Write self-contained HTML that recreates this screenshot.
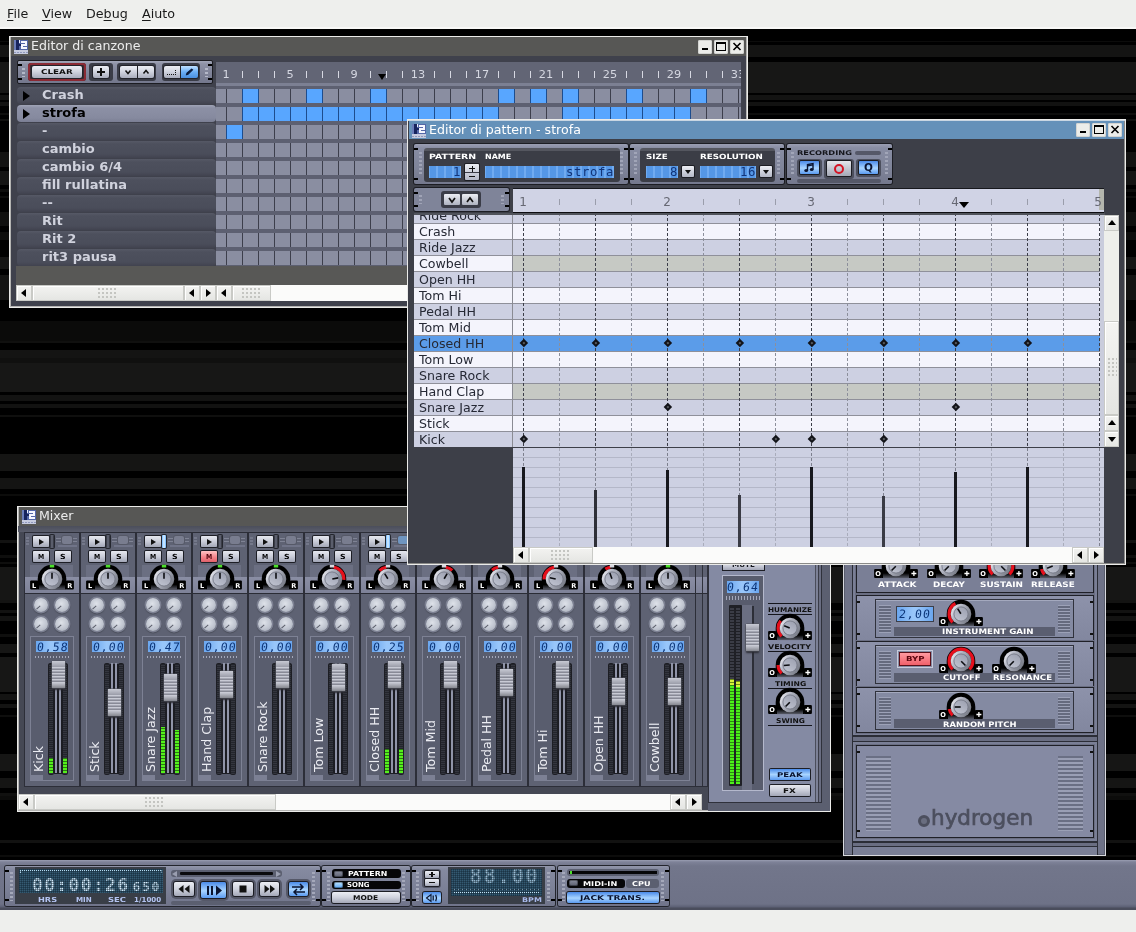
<!DOCTYPE html>
<html lang="it"><head><meta charset="utf-8"><title>Hydrogen</title>
<style>
html,body{margin:0;padding:0}
body{width:1136px;height:932px;overflow:hidden;background:#000;position:relative;
 font-family:"DejaVu Sans","Liberation Sans",sans-serif;font-size:12.6px;color:#000}
.a{position:absolute;box-sizing:border-box}
body>div{will-change:transform}
.t{white-space:nowrap;line-height:1}
.px{font-weight:bold;font-size:8px;letter-spacing:.5px;line-height:8px;white-space:nowrap}
.win{border:1px solid #ebebe9;box-shadow:inset 0 0 0 1px #b4b4b2;overflow:hidden}
.tb{left:1px;top:1px;right:1px;height:19px}
.tb .ti{position:absolute;left:20px;top:2px;font-size:12.6px;line-height:14px;color:#ececec;white-space:nowrap}
.wb{position:absolute;top:3px;width:14px;height:14px;background:#ecedea;border-radius:2px;box-shadow:inset 0 0 0 1px #d4d5d2}
.sbh{background:#fbfbfa}
.sbb{background:linear-gradient(#f4f4f2,#e4e5e2);box-shadow:inset 0 0 0 1px #c9cac6, inset 1px 1px 0 1px #fff}
.grip{position:absolute;left:50%;top:50%;width:19px;height:11px;margin:-5px 0 0 -10px;
 background-image:radial-gradient(circle at 1px 1px,#c4c5c1 0.8px,transparent 1px);background-size:4px 4px}
.tri{position:absolute;left:50%;top:50%;width:0;height:0;border:4px solid transparent}
.tl{border-right:5px solid #000;border-left:0;margin:-4px 0 0 -3px}
.tr{border-left:5px solid #000;border-right:0;margin:-4px 0 0 -2px}
.tu{border-bottom:5px solid #000;border-top:0;margin:-3px 0 0 -4px}
.td{border-top:5px solid #000;border-bottom:0;margin:-2px 0 0 -4px}

.pl{font-weight:bold;white-space:nowrap;transform-origin:0 0}


.kv text{font-weight:bold;font-size:6.6px;fill:#fff;text-anchor:middle;font-family:"DejaVu Sans","Liberation Sans",sans-serif}


#mb{left:0;top:0;width:1136px;height:29px;background:linear-gradient(#eeefed 0,#eeefed 27px,#f8f8f7 27px)}
#mb span{position:absolute;top:6px;font-size:12.7px;line-height:15px;color:#1a1a1a}
#mb u{text-decoration:underline;text-underline-offset:1.5px;text-decoration-thickness:1px}
#desk{left:0;top:29px;width:1136px;height:831px;background:#000}
.band{position:absolute;left:0;width:1136px;background:#121211}
#status{left:0;top:909.5px;width:1136px;height:23px;background:#eeefed}


#sw{left:9px;top:36px;width:739px;height:272px;background:#3f414c}
#sw .tb{background:#575755}
.ico{position:absolute;left:3px;top:3px;width:14px;height:14px;background:#5a6a9a;overflow:hidden}
.ico b{position:absolute;display:block}
#stool{left:8px;top:24px;width:195.5px;height:24px;border:1px solid #1c1d22;border-radius:2px;background:linear-gradient(#a2a6b8 0,#8e92a6 3px,#7e8297 60%,#74788d)}
.brk{position:absolute;width:4px;height:2px;background:#000}
.btn{position:absolute;border-radius:2px;background:linear-gradient(#eceef4 0,#d2d5e0 45%,#a9adbd 100%);box-shadow:0 0 0 1px #22232a;}
.btnwell{position:absolute;border-radius:3px;background:#3a3c47}
.plrow{position:absolute;left:8px;width:199px;height:17px;border-radius:4px;background:linear-gradient(#565966 0,#4d505d 3px,#4a4d5a 13px,#41434f 17px);font-weight:bold;font-size:13px;line-height:17px;color:#d0d2dd;white-space:nowrap}
.plrow i{position:absolute;left:25px;top:-1px;font-style:normal}
.plrow.sel{background:linear-gradient(#a0a4b7 0,#8c90a5 3px,#868a9f 13px,#7a7e93 17px);color:#000}
.plrow s{position:absolute;left:6px;top:3.5px;width:0;height:0;border:5px solid transparent;border-left:7px solid #000;border-right:0}
#sruler{left:207px;top:26px;width:525px;height:21px;background:#626575;overflow:hidden;font-size:11.3px;color:#d6d8e2}
#sruler i{position:absolute;top:9px;width:1px;height:7px;background:#d6d8e2}
#sruler span{position:absolute;top:5.5px;width:30px;margin-left:-15px;text-align:center;line-height:13px}
#sgrid{left:207px;top:47px;width:525px;height:183px;background:#5d6071;overflow:hidden}
.sr{position:absolute;left:0;width:525px;height:14px;background-color:#8a8ea1;
 background-image:linear-gradient(90deg,#3d3f4c 1px,transparent 1px);background-size:16px 14px;background-position:10px 0}
.sr b{position:absolute;top:0;height:14px;background-color:#58a6ff;background-image:linear-gradient(90deg,#1d4d8e 1px,transparent 1px);background-size:16px 14px;background-position:0 0;border-right:1px solid #1d4d8e}


#mw{left:17px;top:506px;width:814px;height:306px;background:#454854}
#mw .tb{background:#575755}
.strip{position:absolute;top:27px;width:54px;height:253px;background:#5e6273;box-shadow:0 0 0 1px #2c2e38}
.sbtn{position:absolute;border-radius:1px;background:linear-gradient(#e6e8ef 0,#c9ccd8 50%,#a3a7b7 100%);box-shadow:0 0 0 1px #1d1e25;font-weight:bold;font-size:7px;line-height:12px;text-align:center;color:#15161c}
.sbtn u{display:inline-block;text-decoration:none;transform:scaleX(1.25)}
.led{position:absolute;left:25px;top:2px;width:4px;height:13px;border-radius:1px;background:linear-gradient(90deg,#2a2c35,#6a6e7e 50%,#2a2c35);box-shadow:0 0 0 1px #24262e}
.led.on{background:linear-gradient(90deg,#6ab4ff,#e0f2ff 50%,#6ab4ff)}
.deco{position:absolute;left:31px;top:3px;width:21px;height:11px;opacity:.55}
.panbox{position:absolute;left:5.4px;top:32.2px;width:42.6px;height:12px;background:#6b6f82}
.panlo{position:absolute;left:0;top:44.2px;width:54px;height:15.6px;background:linear-gradient(#8a8ea4,#7e8298)}
.kb{position:absolute;border-radius:50%;background:#000}
.kn{position:absolute;border-radius:50%;background:radial-gradient(circle at 42% 35%,#dfe2ea 0,#b4b8c6 45%,#7c8090 85%,#5a5d6a 100%);box-shadow:inset 0 0 0 1px #4a4c58}
.kn i{position:absolute;left:50%;top:50%;width:2px;height:7px;margin:-8px 0 0 -1px;background:#16171c;transform-origin:50% 8px}
.kl{position:absolute;width:8px;height:8px;background:#000;color:#fff;font-weight:bold;font-size:8px;line-height:8px;text-align:center;border-radius:1px}
.fxk{position:absolute;width:14px;height:14px;border-radius:50%;background:radial-gradient(circle at 45% 40%,#dee2e9 0,#c0c5d0 55%,#9aa0ae 100%);box-shadow:0 0 0 1.5px #7c8092, 0 1px 1px 1.5px #4c4f5c}
.fxk i{position:absolute;left:2px;top:9px;width:5px;height:1.4px;background:#5a5d6a;transform:rotate(-42deg)}
.fbox{position:absolute;left:5px;top:103px;width:44px;height:145px;background:#595d6e;box-shadow:inset 0 0 0 1px #7d8194}
.lcd{position:absolute;background:linear-gradient(90deg,#6aa6ef,#98c6fa 45%,#98c6fa 55%,#6aa6ef);color:#0c3578;font-family:"DejaVu Sans Mono","Liberation Mono",monospace;font-size:11.5px;line-height:12px;text-align:center;letter-spacing:1.1px;overflow:hidden;white-space:nowrap}
.lcd u{display:inline-block;text-decoration:none;transform:skewX(-7deg);margin-right:-1.1px}
.dots{position:absolute;height:2px;background:repeating-linear-gradient(90deg,#a4a8ba 0 1px,transparent 1px 3px)}
.slot{position:absolute;width:6px;top:27px;height:112px;background:#23252c;border-radius:2px;background-image:repeating-linear-gradient(#34363f 0 1px,#23252c 1px 2px);box-shadow:inset 0 0 0 1px #1d1e24}
.mt{position:absolute;bottom:2px;left:1px;width:4px;background:repeating-linear-gradient(0deg,#55f01c 0 2px,#2c7a12 2px 3px)}
.rail{position:absolute;top:27px;width:1.8px;height:110px;background:#9094a8}
.chan{position:absolute;left:23.6px;top:28px;width:9.6px;height:110px;background:#1b1c22}
.fh{position:absolute;left:22px;width:13.4px;height:27px;border-radius:1px;background:repeating-linear-gradient(#c8cad4 0 1px,#a4a6b2 1px 2px,#888a96 2px 3px);box-shadow:0 0 0 .6px #50525c,0 2px 2px #2a2b33}
.fh:before{content:"";position:absolute;left:0;top:0;width:100%;height:6px;background:linear-gradient(#c8cad4,#9a9ca8)}
.fh:after{content:"";position:absolute;left:0;bottom:0;width:100%;height:5px;background:linear-gradient(#c2c4ce,#85878f)}
.sname{position:absolute;left:8px;top:139px;width:120px;height:14px;transform-origin:0 0;transform:rotate(-90deg);font-size:12.6px;line-height:14px;color:#ebecf2;white-space:nowrap}
.ftab{position:absolute;left:0;bottom:0;width:13px;height:6px;background:#7c8094}
#master{position:absolute;left:692px;top:20px;width:112px;height:276px;background:#848aa3;box-shadow:0 0 0 1px #2f313b}
#mframe{position:absolute;left:691px;top:19px;width:122px;height:286px;background:#5b5f70}
.hl{position:absolute;left:59px;width:44px;height:1px;background:#15161c}
.hz{position:absolute;left:59px;width:44px;text-align:center;font-weight:bold;font-size:7px;line-height:7px;color:#111;letter-spacing:.3px;white-space:nowrap}


#ip{left:843px;top:500px;width:263px;height:356px;background:#6f7388;border:1px solid #d8d9de;
 box-shadow:inset 0 0 0 1px #585c6c;overflow:hidden}
.rk{position:absolute;left:13px;width:236px;background:linear-gradient(#8d92aa,#82879f);box-shadow:0 0 0 1px #1f2027, 0 0 0 2px #6a6e82}
.rki{position:absolute;left:19px;width:197px;background:#848aa2;box-shadow:0 0 0 1px #30323c, inset 0 1px 0 #a4a9be}
.vent{position:absolute;width:12px;background:repeating-linear-gradient(#9ca1b7 0 1px,#656a7e 1px 3px)}
.lbar{position:absolute;left:17.5px;width:161.25px;height:9.5px;background:#5a5e70}
.wl{position:absolute;color:#fff;font-weight:bold;font-size:8px;line-height:8px;letter-spacing:.55px;white-space:nowrap}
.nub{position:absolute;width:3px;height:2px;background:#111}
#logo{position:absolute;left:61px;top:57px;width:130px;height:30px;color:#4c4f5e;font-size:21.5px;line-height:30px;letter-spacing:0;white-space:nowrap;-webkit-text-stroke:.7px #4c4f5e}


#pw{left:407px;top:119px;width:719px;height:446px;background:#3d3f48;box-shadow:inset 0 1px 0 0 #c9d6e2,inset -1px -1px 0 0 #8a8a88}
#pw .tb{background:#6591b9;height:18px}
#pw .wb{top:2px}
.pp{position:absolute;top:25px;height:40px;border-radius:2px;background:linear-gradient(#9a9eb2 0,#888da3 4px,#7f8499 60%,#74788d);box-shadow:0 0 0 1px #1c1d23}
.ppi{position:absolute;top:4px;height:34px;border-radius:3px;background:linear-gradient(#54565f 0,#54565f 3px,#3b3d46 3px)}
.ppi .wl{position:absolute;color:#fff;font-weight:bold;font-size:8px;line-height:8px;letter-spacing:.8px;white-space:nowrap}
.nb{position:absolute;width:4px;height:2px;background:#000}
.rv{position:absolute;width:3px;background:repeating-linear-gradient(#a8acbe 0 2px,transparent 2px 4px);opacity:.8}
.plcd{position:absolute;height:11.5px;background-color:#5597e6;background-image:linear-gradient(90deg,transparent 6px,#70abf1 6px);background-size:8px 12px;background-position:1px 0;
 color:#12357a;font-family:"DejaVu Sans Mono","Liberation Mono",monospace;font-size:12.3px;line-height:12px;text-align:right;white-space:nowrap;overflow:hidden;letter-spacing:.6px}
.dd{position:absolute;width:11.5px;height:11.5px;border-radius:1px;background:linear-gradient(#eceef4,#b4b8c6);box-shadow:0 0 0 1px #1c1d23}
.dd:after{content:"";position:absolute;left:2.5px;top:4px;border:3.2px solid transparent;border-top:4px solid #111;border-bottom:0}
#pruler{left:106px;top:69px;width:591px;height:25px;background:#d0d3e5;border-top:1px solid #17181d;border-bottom:1px solid #0c0c10;overflow:hidden;font-size:12px;color:#666873}
#pruler i{position:absolute;top:9.5px;width:1px;height:6px;background:#9a9dab}
#pruler span{position:absolute;top:5.5px;width:20px;margin-left:-10px;text-align:center;line-height:14px}
#plist{left:7px;top:96px;width:99px;height:232px;overflow:hidden;background:#8f909a;border-right:1px solid #8a8b93}
.ir{position:absolute;left:0;width:98px;height:15px;font-size:12.6px;line-height:15px;color:#262935;white-space:nowrap;padding-left:5px}
#pgrid{left:106px;top:96px;width:591px;height:232px;overflow:hidden;background:#8f909a}
.gr{position:absolute;left:0;width:587px;height:15px}
.vl{position:absolute;top:0;width:1px;height:333px;background:repeating-linear-gradient(#3c3e49 0 2.6px,transparent 2.6px 5px)}
.vl.q{background:repeating-linear-gradient(#8c8f9b 0 2.6px,transparent 2.6px 5px)}
.nt{position:absolute;width:5.8px;height:5.8px;background:#121318;transform:rotate(45deg);margin:-2.9px 0 0 -2.9px}
.nt:after{content:"";position:absolute;left:2.2px;top:2.2px;width:1.4px;height:1.4px;background:#5c5e62}
#pvel{left:106px;top:329px;width:591px;height:99px;overflow:hidden;background:#cdd0e2;background-image:repeating-linear-gradient(#cdd0e2 0 9px,#b4b7c8 9px 10px)}
.vb{position:absolute;bottom:0;width:3px;background:#17181e}


#tbar{left:0;top:860px;width:1136px;height:50px;background:linear-gradient(#9a9eb2 0,#7e8298 2px,#72768b 6px,#6e7287 44px,#5c6074 47px,#4a4d5c 48px,#4a4d5c 50px)}
.tp{position:absolute;top:6px;height:40px;background:linear-gradient(#9397ab 0,#858aa0 3px,#7b8096 60%,#70748a);border-radius:2px;box-shadow:0 0 0 1px #23252d}
.tp .nub{position:absolute;width:4px;height:2px;background:#000}
.rivets{position:absolute;top:6px;width:3px;height:29px;background:repeating-linear-gradient(#a4a8ba 0 2px,transparent 2px 4px)}
.dmb{position:absolute;background:#393e47}
.dm{position:absolute;background-color:#13242e;background-image:radial-gradient(circle at 1px 1px,#345a72 .75px,transparent .95px);background-size:2px 2px;overflow:hidden}
.dg{position:absolute;color:#d4eeff;font-weight:bold;font-family:"DejaVu Sans Mono","Liberation Mono",monospace;white-space:nowrap;line-height:1}
.dmo{position:absolute;left:0;top:0;right:0;bottom:0;background-image:linear-gradient(rgba(16,34,48,.42) 1px,transparent 1px),linear-gradient(90deg,rgba(16,34,48,.42) 1px,transparent 1px);background-size:2px 2px}
.tbtn{position:absolute;border-radius:2px;background:linear-gradient(#eceef4 0,#cfd2dd 50%,#a4a8b8 100%);box-shadow:0 0 0 1px #1c1d24,0 0 0 3px #555868}
.tbtn.nw{box-shadow:0 0 0 1px #1c1d24}
.tbtn.bl2{background:linear-gradient(#4a8ae8,#a8d4ff 55%,#5a9af0)}
.blk{position:absolute;background:#060608;border-radius:3px}
.tled{position:absolute;border-radius:2px;box-shadow:inset 0 0 0 1px rgba(0,0,0,.35)}
</style></head>
<body>
<svg width="0" height="0" style="position:absolute"><defs><linearGradient id="kg" x1="0" y1="0.2" x2="1" y2="0.8"><stop offset="0" stop-color="#f2f2f7"/><stop offset=".3" stop-color="#b8bbc8"/><stop offset="1" stop-color="#70747f"/></linearGradient><linearGradient id="kf" x1="0.8" y1="0" x2="0.2" y2="1"><stop offset="0" stop-color="#9ca0b0"/><stop offset="1" stop-color="#c0c4d1"/></linearGradient><linearGradient id="ks" x1="0" y1="0" x2="0" y2="1"><stop offset="0" stop-color="#000"/><stop offset="1" stop-color="#5a5d6a"/></linearGradient></defs></svg>
<div class="a" id="mb"><span style="left:7px"><u>F</u>ile</span><span style="left:42px"><u>V</u>iew</span><span style="left:86px">De<u>b</u>ug</span><span style="left:142px"><u>A</u>iuto</span></div>
<div class="a" id="desk"><div class="band" style="top:11.5px;height:1.5px;background:#0c0c0b"></div><div class="band" style="top:16px;height:12px;background:#141413"></div><div class="band" style="top:33px;height:30.7px;background:#171716"></div><div class="band" style="top:65.6px;height:5.8px;background:#131312"></div><div class="band" style="top:73px;height:4px;background:#121211"></div><div class="band" style="top:84px;height:2px;background:#0e0e0d"></div><div class="band" style="top:89.7px;height:2px;background:#10100f"></div><div class="band" style="top:122.5px;height:15.5px;background:#131312"></div><div class="band" style="top:142px;height:14px;background:#151514"></div><div class="band" style="top:160px;height:3px;background:#0d0d0c"></div><div class="band" style="top:167px;height:2px;background:#0c0c0b"></div><div class="band" style="top:183px;height:14px;background:#10100f"></div><div class="band" style="top:203px;height:8px;background:#0e0e0d"></div><div class="band" style="top:228px;height:12px;background:#151514"></div><div class="band" style="top:246px;height:25px;background:#141413"></div><div class="band" style="top:292px;height:19.5px;background:#0b0b0a"></div><div class="band" style="top:311.5px;height:2.5px;background:#10100f"></div><div class="band" style="top:320.5px;height:8px;background:#141413"></div><div class="band" style="top:328.5px;height:5.5px;background:#10100f"></div><div class="band" style="top:334px;height:29px;background:#171716"></div><div class="band" style="top:365.5px;height:6.5px;background:#131312"></div><div class="band" style="top:374.5px;height:4.5px;background:#121211"></div><div class="band" style="top:386px;height:2px;background:#0f0f0e"></div><div class="band" style="top:425px;height:17px;background:#151514"></div><div class="band" style="top:449px;height:11px;background:#141413"></div><div class="band" style="top:465px;height:2px;background:#0c0c0b"></div><div class="band" style="top:510.5px;height:3px;background:#121211"></div><div class="band" style="top:526px;height:3px;background:#0e0e0d"></div><div class="band" style="top:532.7px;height:2px;background:#0e0e0d"></div><div class="band" style="top:537.6px;height:33.8px;background:#161615"></div><div class="band" style="top:571.4px;height:2.6px;background:#131312"></div><div class="band" style="top:581px;height:3px;background:#121211"></div><div class="band" style="top:586.8px;height:4.8px;background:#131312"></div><div class="band" style="top:605px;height:3px;background:#0f0f0e"></div><div class="band" style="top:615px;height:8.5px;background:#161615"></div><div class="band" style="top:628px;height:34.6px;background:#171716"></div><div class="band" style="top:664.5px;height:6.5px;background:#141413"></div><div class="band" style="top:675px;height:4px;background:#141413"></div><div class="band" style="top:685.7px;height:2px;background:#0e0e0d"></div><div class="band" style="top:725px;height:16.7px;background:#161615"></div><div class="band" style="top:748.5px;height:10.5px;background:#151514"></div><div class="band" style="top:764px;height:3px;background:#111110"></div><div class="band" style="top:767px;height:4px;background:#0c0c0b"></div><div class="band" style="top:811px;height:3px;background:#121211"></div><div class="band" style="top:825.7px;height:1.9px;background:#0c0c0b"></div></div>
<div class="a" id="status"></div>
<div class="a win" id="sw"><div class="a" style="left:-1px;top:-1px;width:739px;height:272px"><div class="a tb" style="left:2px;top:1px;width:735px"><div class="ico"><b style="left:0px;top:0px;width:14px;height:10px;background:#5467a8"></b><b style="left:2px;top:0px;width:3px;height:10px;background:#17245e"></b><b style="left:5px;top:4px;width:2px;height:2px;background:#17245e"></b><b style="left:0px;top:0px;width:2px;height:10px;background:#6a7cb8"></b><b style="left:5px;top:0px;width:1px;height:3px;background:#e8ecf8"></b><b style="left:7px;top:1px;width:6px;height:1.6px;background:#f6f7ff"></b><b style="left:11.4px;top:2px;width:1.6px;height:3px;background:#f6f7ff"></b><b style="left:7px;top:4.2px;width:6px;height:1.6px;background:#f6f7ff"></b><b style="left:7px;top:5px;width:1.6px;height:3px;background:#f6f7ff"></b><b style="left:7px;top:7.4px;width:6px;height:1.6px;background:#f6f7ff"></b><b style="left:0px;top:10px;width:14px;height:4px;background:#c6cbdf"></b><b style="left:0px;top:12px;width:14px;height:1px;background:repeating-linear-gradient(90deg,#8f98bc 0 2px,#c6cbdf 2px 3px)"></b></div><div class="ti">Editor di canzone</div><div class="wb" style="left:687px"><b style="position:absolute;left:4px;top:8px;width:6px;height:2px;background:#000"></b></div><div class="wb" style="left:703px"><b style="position:absolute;left:2px;top:2px;width:10px;height:9px;border:1px solid #000;border-top-width:2px;box-sizing:border-box"></b></div><div class="wb" style="left:719px"><svg width="14" height="14" style="position:absolute;left:0;top:0"><path d="M3.5 3 L10.5 10 M10.5 3 L3.5 10" stroke="#000" stroke-width="1.6" fill="none"/></svg></div></div><div class="a" id="stool"><div class="brk" style="left:0;top:3px"></div><div class="brk" style="right:0;top:3px"></div><div class="brk" style="left:0;top:17px"></div><div class="brk" style="right:0;top:17px"></div><b class="a" style="left:4px;top:7px;width:3px;height:9px;background:repeating-linear-gradient(#b4b8c8 0 2px,transparent 2px 4px)"></b><b class="a" style="right:4px;top:7px;width:3px;height:9px;background:repeating-linear-gradient(#b4b8c8 0 2px,transparent 2px 4px)"></b><div class="a" style="left:10px;top:2px;width:58px;height:18px;border-radius:3px;background:#3a2a30;box-shadow:inset 0 0 0 2px #8a2a34"></div><div class="btn" style="left:14px;top:5px;width:50px;height:12px"><div class="a pl" style="left:8.75px;top:2.5278px;font-size:6.6px;line-height:6.6px;color:#111;transform:scaleX(1.337);">CLEAR</div></div><div class="btnwell" style="left:71px;top:2px;width:24px;height:18px"></div><div class="btn" style="left:75px;top:5px;width:16px;height:12px"><b class="a" style="left:4px;top:5.3px;width:8px;height:1.4px;background:#111"></b><b class="a" style="left:7.3px;top:2px;width:1.4px;height:8px;background:#111"></b></div><div class="btnwell" style="left:99.4px;top:2px;width:39px;height:18px"></div><div class="btn" style="left:102px;top:5px;width:16.5px;height:12px;border-radius:2px 0 0 2px"><svg class="a" width="16" height="12" style="left:0;top:0"><path d="M5.5 4.5 L8 7.5 L10.5 4.5" stroke="#111" stroke-width="1.5" fill="none"/></svg></div><div class="btn" style="left:119.5px;top:5px;width:16.5px;height:12px;border-radius:0 2px 2px 0"><svg class="a" width="16" height="12" style="left:0;top:0"><path d="M5.5 7.5 L8 4.5 L10.5 7.5" stroke="#111" stroke-width="1.5" fill="none"/></svg></div><div class="btnwell" style="left:143.8px;top:2px;width:38.6px;height:18px"></div><div class="btn" style="left:146px;top:5px;width:16px;height:12px;border-radius:2px 0 0 2px"><b class="a" style="left:3px;top:8px;width:7px;height:1px;background:repeating-linear-gradient(90deg,#111 0 1px,transparent 1px 2px)"></b><b class="a" style="left:11px;top:4px;width:1px;height:5px;background:repeating-linear-gradient(#111 0 1px,transparent 1px 2px)"></b></div><div class="btn" style="left:163px;top:5px;width:17px;height:12px;border-radius:0 2px 2px 0;background:linear-gradient(#bfe0ff,#6aaef6 50%,#4a8fe0)"><svg class="a" width="17" height="12" style="left:0;top:0"><path d="M5.5 8.6 L7 8.3 L11.5 3.8 L10.6 3.2 L6 7 Z" fill="#0a1a3a" stroke="#0a1a3a" stroke-width="1.1"/></svg></div></div><div class="plrow" style="top:51px"><s></s><i>Crash</i></div><div class="plrow sel" style="top:69px"><s></s><i>strofa</i></div><div class="plrow" style="top:87px"><i>-</i></div><div class="plrow" style="top:105px"><i>cambio</i></div><div class="plrow" style="top:123px"><i>cambio 6/4</i></div><div class="plrow" style="top:141px"><i>fill rullatina</i></div><div class="plrow" style="top:159px"><i>--</i></div><div class="plrow" style="top:177px"><i>Rit</i></div><div class="plrow" style="top:195px"><i>Rit 2</i></div><div class="plrow" style="top:213px"><i>rit3 pausa</i></div><div class="a" id="sruler"><span style="left:10px">1</span><i style="left:26px"></i><i style="left:42px"></i><i style="left:58px"></i><span style="left:74px">5</span><i style="left:90px"></i><i style="left:106px"></i><i style="left:122px"></i><span style="left:138px">9</span><i style="left:154px"></i><i style="left:170px"></i><i style="left:186px"></i><span style="left:202px">13</span><i style="left:218px"></i><i style="left:234px"></i><i style="left:250px"></i><span style="left:266px">17</span><i style="left:282px"></i><i style="left:298px"></i><i style="left:314px"></i><span style="left:330px">21</span><i style="left:346px"></i><i style="left:362px"></i><i style="left:378px"></i><span style="left:394px">25</span><i style="left:410px"></i><i style="left:426px"></i><i style="left:442px"></i><span style="left:458px">29</span><i style="left:474px"></i><i style="left:490px"></i><i style="left:506px"></i><span style="left:522px">33</span><i style="left:538px"></i><b class="a" style="left:162px;top:12px;width:0;height:0;border:4.5px solid transparent;border-top:6px solid #000;border-bottom:0"></b></div><div class="a" id="sgrid"><div class="a" style="left:0;top:0;width:525px;height:3px;background:#7c8093"></div><div class="sr" style="top:6px"><b style="left:26px;width:16px"></b><b style="left:90px;width:16px"></b><b style="left:154px;width:16px"></b><b style="left:282px;width:16px"></b><b style="left:314px;width:16px"></b><b style="left:346px;width:16px"></b><b style="left:410px;width:16px"></b><b style="left:474px;width:16px"></b></div><div class="sr" style="top:24px"><b style="left:26px;width:256px"></b><b style="left:346px;width:128px"></b></div><div class="sr" style="top:42px"><b style="left:10px;width:16px"></b></div><div class="sr" style="top:60px"></div><div class="sr" style="top:78px"></div><div class="sr" style="top:96px"></div><div class="sr" style="top:114px"></div><div class="sr" style="top:132px"></div><div class="sr" style="top:150px"></div><div class="sr" style="top:168px"></div></div><div class="a" style="left:7px;top:230px;width:725px;height:19px;background:#585856"></div><div class="a sbh" style="left:7px;top:249px;width:200px;height:16px;"></div><div class="a sbb" style="left:7px;top:249px;width:16px;height:16px;"><div class="tri tl"></div></div><div class="a sbb" style="left:175px;top:249px;width:16px;height:16px;"><div class="tri tl"></div></div><div class="a sbb" style="left:191px;top:249px;width:16px;height:16px;"><div class="tri tr"></div></div><div class="a sbb" style="left:23px;top:249px;width:152px;height:16px;"><div class="grip"></div></div><div class="a sbh" style="left:207px;top:249px;width:525px;height:16px;"></div><div class="a sbb" style="left:207px;top:249px;width:16px;height:16px;"><div class="tri tl"></div></div><div class="a sbb" style="left:700px;top:249px;width:16px;height:16px;"><div class="tri tl"></div></div><div class="a sbb" style="left:716px;top:249px;width:16px;height:16px;"><div class="tri tr"></div></div><div class="a sbb" style="left:223px;top:249px;width:39px;height:16px;"><div class="grip"></div></div></div></div>
<div class="a win" id="mw"><div class="a" style="left:-1px;top:-1px;width:814px;height:306px"><div class="a tb" style="left:2px;top:1px;width:810px"><div class="ico"><b style="left:0px;top:0px;width:14px;height:10px;background:#5467a8"></b><b style="left:2px;top:0px;width:3px;height:10px;background:#17245e"></b><b style="left:5px;top:4px;width:2px;height:2px;background:#17245e"></b><b style="left:0px;top:0px;width:2px;height:10px;background:#6a7cb8"></b><b style="left:5px;top:0px;width:1px;height:3px;background:#e8ecf8"></b><b style="left:7px;top:1px;width:6px;height:1.6px;background:#f6f7ff"></b><b style="left:11.4px;top:2px;width:1.6px;height:3px;background:#f6f7ff"></b><b style="left:7px;top:4.2px;width:6px;height:1.6px;background:#f6f7ff"></b><b style="left:7px;top:5px;width:1.6px;height:3px;background:#f6f7ff"></b><b style="left:7px;top:7.4px;width:6px;height:1.6px;background:#f6f7ff"></b><b style="left:0px;top:10px;width:14px;height:4px;background:#c6cbdf"></b><b style="left:0px;top:12px;width:14px;height:1px;background:repeating-linear-gradient(90deg,#8f98bc 0 2px,#c6cbdf 2px 3px)"></b></div><div class="ti">Mixer</div></div><div class="a" style="left:1px;top:20px;width:812px;height:6px;background:linear-gradient(#4b4e5b,#5a5d6c)"></div><div class="strip" style="left:8px"><b class="a" style="left:1px;top:4px;width:3px;height:9px;background:repeating-linear-gradient(#74788a 0 2px,transparent 2px 3px)"></b><div class="sbtn" style="left:8px;top:3px;width:16px;height:11px"><b class="a" style="left:6px;top:2.5px;width:0;height:0;border:3px solid transparent;border-left:5px solid #111;border-right:0"></b></div><div class="led"></div><div class="deco"><b class="a" style="left:0;top:2px;width:21px;height:1px;background:#9a9eb0"></b><b class="a" style="left:0;top:5px;width:21px;height:1px;background:#9a9eb0"></b><b class="a" style="left:6px;top:0;width:10px;height:8px;border-radius:2px;background:#9094a6;box-shadow:0 0 0 1px #50535f"></b><b class="a" style="left:2px;top:9px;width:19px;height:2px;background:#80849a"></b></div><div class="sbtn" style="left:8px;top:18px;width:16px;height:11px;"><div class="a pl" style="left:4.9px;top:3.181px;font-size:7px;line-height:7px;color:#000;transform:scaleX(0.890);">M</div></div><div class="sbtn" style="left:30px;top:18px;width:16px;height:11px"><div class="a pl" style="left:5.2px;top:3.181px;font-size:7px;line-height:7px;color:#000;transform:scaleX(1.111);">S</div></div><div class="panbox"></div><div class="panlo"></div><svg class="a kv" style="left:4.1px;top:30.3px" width="46" height="27" viewBox="-23 -16 46 27"><path d="M-14.3 0 A14.3 14.3 0 1 1 14.3 0 V10.6 H-14.3 Z" fill="#000"/><rect x="-13" y="5.6" width="26" height="5" fill="url(#ks)"/><rect x="-21.9" y="1.5" width="8" height="9.1" rx="1" fill="#000"/><rect x="13.9" y="1.5" width="8" height="9.1" rx="1" fill="#000"/><circle r="10.3" fill="url(#kg)"/><circle r="7.1" fill="url(#kf)" stroke="#6c707e" stroke-width=".8"/><path d="M0.00 -0.30 L0.00 -6.30" stroke="#0c0d11" stroke-width="1.6"/><text x="-18" y="8.5">L</text><text x="17.9" y="8.5">R</text><rect x="-2.2" y="-14.2" width="4.4" height="2.7" fill="#4be02a"/></svg><div class="a" style="left:0;top:59.8px;width:54px;height:1.6px;background:#2a2c35"></div><div class="fxk" style="left:9px;top:65px"><i></i></div><div class="fxk" style="left:9px;top:84px"><i></i></div><div class="fxk" style="left:30px;top:65px"><i></i></div><div class="fxk" style="left:30px;top:84px"><i></i></div><div class="fbox"><div class="lcd" style="left:6.2px;top:4.6px;width:31.8px;height:11.6px;letter-spacing:.95px"><u style="margin-right:-.95px">0,58</u></div><div class="dots" style="left:5px;top:20px;width:35px"></div><div class="slot" style="left:18px"><div class="mt" style="height:15px"></div></div><div class="slot" style="left:32px"><div class="mt" style="height:15px"></div></div><div class="chan"></div><div class="rail" style="left:24.9px"></div><div class="rail" style="left:29px"></div><div class="fh" style="top:25px"></div><div class="ftab"></div><div class="sname" style="top:136px;left:2.4px">Kick</div></div></div><div class="strip" style="left:64px"><b class="a" style="left:1px;top:4px;width:3px;height:9px;background:repeating-linear-gradient(#74788a 0 2px,transparent 2px 3px)"></b><div class="sbtn" style="left:8px;top:3px;width:16px;height:11px"><b class="a" style="left:6px;top:2.5px;width:0;height:0;border:3px solid transparent;border-left:5px solid #111;border-right:0"></b></div><div class="led"></div><div class="deco"><b class="a" style="left:0;top:2px;width:21px;height:1px;background:#9a9eb0"></b><b class="a" style="left:0;top:5px;width:21px;height:1px;background:#9a9eb0"></b><b class="a" style="left:6px;top:0;width:10px;height:8px;border-radius:2px;background:#9094a6;box-shadow:0 0 0 1px #50535f"></b><b class="a" style="left:2px;top:9px;width:19px;height:2px;background:#80849a"></b></div><div class="sbtn" style="left:8px;top:18px;width:16px;height:11px;"><div class="a pl" style="left:4.9px;top:3.181px;font-size:7px;line-height:7px;color:#000;transform:scaleX(0.890);">M</div></div><div class="sbtn" style="left:30px;top:18px;width:16px;height:11px"><div class="a pl" style="left:5.2px;top:3.181px;font-size:7px;line-height:7px;color:#000;transform:scaleX(1.111);">S</div></div><div class="panbox"></div><div class="panlo"></div><svg class="a kv" style="left:4.1px;top:30.3px" width="46" height="27" viewBox="-23 -16 46 27"><path d="M-14.3 0 A14.3 14.3 0 1 1 14.3 0 V10.6 H-14.3 Z" fill="#000"/><rect x="-13" y="5.6" width="26" height="5" fill="url(#ks)"/><rect x="-21.9" y="1.5" width="8" height="9.1" rx="1" fill="#000"/><rect x="13.9" y="1.5" width="8" height="9.1" rx="1" fill="#000"/><circle r="10.3" fill="url(#kg)"/><circle r="7.1" fill="url(#kf)" stroke="#6c707e" stroke-width=".8"/><path d="M0.00 -0.30 L0.00 -6.30" stroke="#0c0d11" stroke-width="1.6"/><text x="-18" y="8.5">L</text><text x="17.9" y="8.5">R</text><rect x="-2.2" y="-14.2" width="4.4" height="2.7" fill="#4be02a"/></svg><div class="a" style="left:0;top:59.8px;width:54px;height:1.6px;background:#2a2c35"></div><div class="fxk" style="left:9px;top:65px"><i></i></div><div class="fxk" style="left:9px;top:84px"><i></i></div><div class="fxk" style="left:30px;top:65px"><i></i></div><div class="fxk" style="left:30px;top:84px"><i></i></div><div class="fbox"><div class="lcd" style="left:6.2px;top:4.6px;width:31.8px;height:11.6px;letter-spacing:.95px"><u style="margin-right:-.95px">0,00</u></div><div class="dots" style="left:5px;top:20px;width:35px"></div><div class="slot" style="left:18px"></div><div class="slot" style="left:32px"></div><div class="chan"></div><div class="rail" style="left:24.9px"></div><div class="rail" style="left:29px"></div><div class="fh" style="top:52.5px"></div><div class="ftab"></div><div class="sname" style="top:136px;left:2.4px">Stick</div></div></div><div class="strip" style="left:120px"><b class="a" style="left:1px;top:4px;width:3px;height:9px;background:repeating-linear-gradient(#74788a 0 2px,transparent 2px 3px)"></b><div class="sbtn" style="left:8px;top:3px;width:16px;height:11px"><b class="a" style="left:6px;top:2.5px;width:0;height:0;border:3px solid transparent;border-left:5px solid #111;border-right:0"></b></div><div class="led on"></div><div class="deco"><b class="a" style="left:0;top:2px;width:21px;height:1px;background:#9a9eb0"></b><b class="a" style="left:0;top:5px;width:21px;height:1px;background:#9a9eb0"></b><b class="a" style="left:6px;top:0;width:10px;height:8px;border-radius:2px;background:#9094a6;box-shadow:0 0 0 1px #50535f"></b><b class="a" style="left:2px;top:9px;width:19px;height:2px;background:#80849a"></b></div><div class="sbtn" style="left:8px;top:18px;width:16px;height:11px;"><div class="a pl" style="left:4.9px;top:3.181px;font-size:7px;line-height:7px;color:#000;transform:scaleX(0.890);">M</div></div><div class="sbtn" style="left:30px;top:18px;width:16px;height:11px"><div class="a pl" style="left:5.2px;top:3.181px;font-size:7px;line-height:7px;color:#000;transform:scaleX(1.111);">S</div></div><div class="panbox"></div><div class="panlo"></div><svg class="a kv" style="left:4.1px;top:30.3px" width="46" height="27" viewBox="-23 -16 46 27"><path d="M-14.3 0 A14.3 14.3 0 1 1 14.3 0 V10.6 H-14.3 Z" fill="#000"/><rect x="-13" y="5.6" width="26" height="5" fill="url(#ks)"/><rect x="-21.9" y="1.5" width="8" height="9.1" rx="1" fill="#000"/><rect x="13.9" y="1.5" width="8" height="9.1" rx="1" fill="#000"/><circle r="10.3" fill="url(#kg)"/><circle r="7.1" fill="url(#kf)" stroke="#6c707e" stroke-width=".8"/><path d="M0.00 -0.30 L0.00 -6.30" stroke="#0c0d11" stroke-width="1.6"/><text x="-18" y="8.5">L</text><text x="17.9" y="8.5">R</text><rect x="-2.2" y="-14.2" width="4.4" height="2.7" fill="#4be02a"/></svg><div class="a" style="left:0;top:59.8px;width:54px;height:1.6px;background:#2a2c35"></div><div class="fxk" style="left:9px;top:65px"><i></i></div><div class="fxk" style="left:9px;top:84px"><i></i></div><div class="fxk" style="left:30px;top:65px"><i></i></div><div class="fxk" style="left:30px;top:84px"><i></i></div><div class="fbox"><div class="lcd" style="left:6.2px;top:4.6px;width:31.8px;height:11.6px;letter-spacing:.95px"><u style="margin-right:-.95px">0,47</u></div><div class="dots" style="left:5px;top:20px;width:35px"></div><div class="slot" style="left:18px"><div class="mt" style="height:46px"></div></div><div class="slot" style="left:32px"><div class="mt" style="height:43px"></div></div><div class="chan"></div><div class="rail" style="left:24.9px"></div><div class="rail" style="left:29px"></div><div class="fh" style="top:38px"></div><div class="ftab"></div><div class="sname" style="top:136px;left:2.4px">Snare Jazz</div></div></div><div class="strip" style="left:176px"><b class="a" style="left:1px;top:4px;width:3px;height:9px;background:repeating-linear-gradient(#74788a 0 2px,transparent 2px 3px)"></b><div class="sbtn" style="left:8px;top:3px;width:16px;height:11px"><b class="a" style="left:6px;top:2.5px;width:0;height:0;border:3px solid transparent;border-left:5px solid #111;border-right:0"></b></div><div class="led"></div><div class="deco"><b class="a" style="left:0;top:2px;width:21px;height:1px;background:#9a9eb0"></b><b class="a" style="left:0;top:5px;width:21px;height:1px;background:#9a9eb0"></b><b class="a" style="left:6px;top:0;width:10px;height:8px;border-radius:2px;background:#9094a6;box-shadow:0 0 0 1px #50535f"></b><b class="a" style="left:2px;top:9px;width:19px;height:2px;background:#80849a"></b></div><div class="sbtn" style="left:8px;top:18px;width:16px;height:11px;background:linear-gradient(#ffc4c4,#f4848a 55%,#e0606a);color:#5a0a10"><div class="a pl" style="left:4.9px;top:3.181px;font-size:7px;line-height:7px;color:#4a0008;transform:scaleX(0.890);">M</div></div><div class="sbtn" style="left:30px;top:18px;width:16px;height:11px"><div class="a pl" style="left:5.2px;top:3.181px;font-size:7px;line-height:7px;color:#000;transform:scaleX(1.111);">S</div></div><div class="panbox"></div><div class="panlo"></div><svg class="a kv" style="left:4.1px;top:30.3px" width="46" height="27" viewBox="-23 -16 46 27"><path d="M-14.3 0 A14.3 14.3 0 1 1 14.3 0 V10.6 H-14.3 Z" fill="#000"/><rect x="-13" y="5.6" width="26" height="5" fill="url(#ks)"/><rect x="-21.9" y="1.5" width="8" height="9.1" rx="1" fill="#000"/><rect x="13.9" y="1.5" width="8" height="9.1" rx="1" fill="#000"/><circle r="10.3" fill="url(#kg)"/><circle r="7.1" fill="url(#kf)" stroke="#6c707e" stroke-width=".8"/><path d="M0.00 -0.30 L0.00 -6.30" stroke="#0c0d11" stroke-width="1.6"/><text x="-18" y="8.5">L</text><text x="17.9" y="8.5">R</text><rect x="-2.2" y="-14.2" width="4.4" height="2.7" fill="#4be02a"/></svg><div class="a" style="left:0;top:59.8px;width:54px;height:1.6px;background:#2a2c35"></div><div class="fxk" style="left:9px;top:65px"><i></i></div><div class="fxk" style="left:9px;top:84px"><i></i></div><div class="fxk" style="left:30px;top:65px"><i></i></div><div class="fxk" style="left:30px;top:84px"><i></i></div><div class="fbox"><div class="lcd" style="left:6.2px;top:4.6px;width:31.8px;height:11.6px;letter-spacing:.95px"><u style="margin-right:-.95px">0,00</u></div><div class="dots" style="left:5px;top:20px;width:35px"></div><div class="slot" style="left:18px"></div><div class="slot" style="left:32px"></div><div class="chan"></div><div class="rail" style="left:24.9px"></div><div class="rail" style="left:29px"></div><div class="fh" style="top:35px"></div><div class="ftab"></div><div class="sname" style="top:136px;left:2.4px">Hand Clap</div></div></div><div class="strip" style="left:232px"><b class="a" style="left:1px;top:4px;width:3px;height:9px;background:repeating-linear-gradient(#74788a 0 2px,transparent 2px 3px)"></b><div class="sbtn" style="left:8px;top:3px;width:16px;height:11px"><b class="a" style="left:6px;top:2.5px;width:0;height:0;border:3px solid transparent;border-left:5px solid #111;border-right:0"></b></div><div class="led"></div><div class="deco"><b class="a" style="left:0;top:2px;width:21px;height:1px;background:#9a9eb0"></b><b class="a" style="left:0;top:5px;width:21px;height:1px;background:#9a9eb0"></b><b class="a" style="left:6px;top:0;width:10px;height:8px;border-radius:2px;background:#9094a6;box-shadow:0 0 0 1px #50535f"></b><b class="a" style="left:2px;top:9px;width:19px;height:2px;background:#80849a"></b></div><div class="sbtn" style="left:8px;top:18px;width:16px;height:11px;"><div class="a pl" style="left:4.9px;top:3.181px;font-size:7px;line-height:7px;color:#000;transform:scaleX(0.890);">M</div></div><div class="sbtn" style="left:30px;top:18px;width:16px;height:11px"><div class="a pl" style="left:5.2px;top:3.181px;font-size:7px;line-height:7px;color:#000;transform:scaleX(1.111);">S</div></div><div class="panbox"></div><div class="panlo"></div><svg class="a kv" style="left:4.1px;top:30.3px" width="46" height="27" viewBox="-23 -16 46 27"><path d="M-14.3 0 A14.3 14.3 0 1 1 14.3 0 V10.6 H-14.3 Z" fill="#000"/><rect x="-13" y="5.6" width="26" height="5" fill="url(#ks)"/><rect x="-21.9" y="1.5" width="8" height="9.1" rx="1" fill="#000"/><rect x="13.9" y="1.5" width="8" height="9.1" rx="1" fill="#000"/><circle r="10.3" fill="url(#kg)"/><circle r="7.1" fill="url(#kf)" stroke="#6c707e" stroke-width=".8"/><path d="M0.00 -0.30 L0.00 -6.30" stroke="#0c0d11" stroke-width="1.6"/><text x="-18" y="8.5">L</text><text x="17.9" y="8.5">R</text><rect x="-2.2" y="-14.2" width="4.4" height="2.7" fill="#4be02a"/></svg><div class="a" style="left:0;top:59.8px;width:54px;height:1.6px;background:#2a2c35"></div><div class="fxk" style="left:9px;top:65px"><i></i></div><div class="fxk" style="left:9px;top:84px"><i></i></div><div class="fxk" style="left:30px;top:65px"><i></i></div><div class="fxk" style="left:30px;top:84px"><i></i></div><div class="fbox"><div class="lcd" style="left:6.2px;top:4.6px;width:31.8px;height:11.6px;letter-spacing:.95px"><u style="margin-right:-.95px">0,00</u></div><div class="dots" style="left:5px;top:20px;width:35px"></div><div class="slot" style="left:18px"></div><div class="slot" style="left:32px"></div><div class="chan"></div><div class="rail" style="left:24.9px"></div><div class="rail" style="left:29px"></div><div class="fh" style="top:25px"></div><div class="ftab"></div><div class="sname" style="top:136px;left:2.4px">Snare Rock</div></div></div><div class="strip" style="left:288px"><b class="a" style="left:1px;top:4px;width:3px;height:9px;background:repeating-linear-gradient(#74788a 0 2px,transparent 2px 3px)"></b><div class="sbtn" style="left:8px;top:3px;width:16px;height:11px"><b class="a" style="left:6px;top:2.5px;width:0;height:0;border:3px solid transparent;border-left:5px solid #111;border-right:0"></b></div><div class="led"></div><div class="deco"><b class="a" style="left:0;top:2px;width:21px;height:1px;background:#9a9eb0"></b><b class="a" style="left:0;top:5px;width:21px;height:1px;background:#9a9eb0"></b><b class="a" style="left:6px;top:0;width:10px;height:8px;border-radius:2px;background:#9094a6;box-shadow:0 0 0 1px #50535f"></b><b class="a" style="left:2px;top:9px;width:19px;height:2px;background:#80849a"></b></div><div class="sbtn" style="left:8px;top:18px;width:16px;height:11px;"><div class="a pl" style="left:4.9px;top:3.181px;font-size:7px;line-height:7px;color:#000;transform:scaleX(0.890);">M</div></div><div class="sbtn" style="left:30px;top:18px;width:16px;height:11px"><div class="a pl" style="left:5.2px;top:3.181px;font-size:7px;line-height:7px;color:#000;transform:scaleX(1.111);">S</div></div><div class="panbox"></div><div class="panlo"></div><svg class="a kv" style="left:4.1px;top:30.3px" width="46" height="27" viewBox="-23 -16 46 27"><path d="M-14.3 0 A14.3 14.3 0 1 1 14.3 0 V10.6 H-14.3 Z" fill="#000"/><rect x="-13" y="5.6" width="26" height="5" fill="url(#ks)"/><rect x="-21.9" y="1.5" width="8" height="9.1" rx="1" fill="#000"/><rect x="13.9" y="1.5" width="8" height="9.1" rx="1" fill="#000"/><path d="M1.66 -11.78 A11.9 11.9 0 0 1 11.87 0.83" stroke="#e60f1c" stroke-width="3.2" fill="none"/><circle r="10.3" fill="url(#kg)"/><circle r="7.1" fill="url(#kf)" stroke="#6c707e" stroke-width=".8"/><path d="M0.30 -0.05 L6.20 -1.09" stroke="#0c0d11" stroke-width="1.6"/><text x="-18" y="8.5">L</text><text x="17.9" y="8.5">R</text><rect x="-2.2" y="-14.2" width="4.4" height="2.7" fill="#d8d8e0"/></svg><div class="a" style="left:0;top:59.8px;width:54px;height:1.6px;background:#2a2c35"></div><div class="fxk" style="left:9px;top:65px"><i></i></div><div class="fxk" style="left:9px;top:84px"><i></i></div><div class="fxk" style="left:30px;top:65px"><i></i></div><div class="fxk" style="left:30px;top:84px"><i></i></div><div class="fbox"><div class="lcd" style="left:6.2px;top:4.6px;width:31.8px;height:11.6px;letter-spacing:.95px"><u style="margin-right:-.95px">0,00</u></div><div class="dots" style="left:5px;top:20px;width:35px"></div><div class="slot" style="left:18px"></div><div class="slot" style="left:32px"></div><div class="chan"></div><div class="rail" style="left:24.9px"></div><div class="rail" style="left:29px"></div><div class="fh" style="top:28px"></div><div class="ftab"></div><div class="sname" style="top:136px;left:2.4px">Tom Low</div></div></div><div class="strip" style="left:344px"><b class="a" style="left:1px;top:4px;width:3px;height:9px;background:repeating-linear-gradient(#74788a 0 2px,transparent 2px 3px)"></b><div class="sbtn" style="left:8px;top:3px;width:16px;height:11px"><b class="a" style="left:6px;top:2.5px;width:0;height:0;border:3px solid transparent;border-left:5px solid #111;border-right:0"></b></div><div class="led on"></div><div class="deco"><b class="a" style="left:0;top:2px;width:21px;height:1px;background:#9a9eb0"></b><b class="a" style="left:0;top:5px;width:21px;height:1px;background:#9a9eb0"></b><b class="a" style="left:6px;top:0;width:10px;height:8px;border-radius:2px;background:#7ec0ff;box-shadow:0 0 0 1px #50535f"></b><b class="a" style="left:2px;top:9px;width:19px;height:2px;background:#80849a"></b></div><div class="sbtn" style="left:8px;top:18px;width:16px;height:11px;"><div class="a pl" style="left:4.9px;top:3.181px;font-size:7px;line-height:7px;color:#000;transform:scaleX(0.890);">M</div></div><div class="sbtn" style="left:30px;top:18px;width:16px;height:11px"><div class="a pl" style="left:5.2px;top:3.181px;font-size:7px;line-height:7px;color:#000;transform:scaleX(1.111);">S</div></div><div class="panbox"></div><div class="panlo"></div><svg class="a kv" style="left:4.1px;top:30.3px" width="46" height="27" viewBox="-23 -16 46 27"><path d="M-14.3 0 A14.3 14.3 0 1 1 14.3 0 V10.6 H-14.3 Z" fill="#000"/><rect x="-13" y="5.6" width="26" height="5" fill="url(#ks)"/><rect x="-21.9" y="1.5" width="8" height="9.1" rx="1" fill="#000"/><rect x="13.9" y="1.5" width="8" height="9.1" rx="1" fill="#000"/><path d="M-8.56 -8.27 A11.9 11.9 0 0 1 -1.66 -11.78" stroke="#e60f1c" stroke-width="3.2" fill="none"/><circle r="10.3" fill="url(#kg)"/><circle r="7.1" fill="url(#kf)" stroke="#6c707e" stroke-width=".8"/><path d="M-0.16 -0.25 L-3.34 -5.34" stroke="#0c0d11" stroke-width="1.6"/><text x="-18" y="8.5">L</text><text x="17.9" y="8.5">R</text><rect x="-2.2" y="-14.2" width="4.4" height="2.7" fill="#d8d8e0"/></svg><div class="a" style="left:0;top:59.8px;width:54px;height:1.6px;background:#2a2c35"></div><div class="fxk" style="left:9px;top:65px"><i></i></div><div class="fxk" style="left:9px;top:84px"><i></i></div><div class="fxk" style="left:30px;top:65px"><i></i></div><div class="fxk" style="left:30px;top:84px"><i></i></div><div class="fbox"><div class="lcd" style="left:6.2px;top:4.6px;width:31.8px;height:11.6px;letter-spacing:.95px"><u style="margin-right:-.95px">0,25</u></div><div class="dots" style="left:5px;top:20px;width:35px"></div><div class="slot" style="left:18px"><div class="mt" style="height:24px"></div></div><div class="slot" style="left:32px"><div class="mt" style="height:24px"></div></div><div class="chan"></div><div class="rail" style="left:24.9px"></div><div class="rail" style="left:29px"></div><div class="fh" style="top:25px"></div><div class="ftab"></div><div class="sname" style="top:136px;left:2.4px">Closed HH</div></div></div><div class="strip" style="left:400px"><b class="a" style="left:1px;top:4px;width:3px;height:9px;background:repeating-linear-gradient(#74788a 0 2px,transparent 2px 3px)"></b><div class="sbtn" style="left:8px;top:3px;width:16px;height:11px"><b class="a" style="left:6px;top:2.5px;width:0;height:0;border:3px solid transparent;border-left:5px solid #111;border-right:0"></b></div><div class="led"></div><div class="deco"><b class="a" style="left:0;top:2px;width:21px;height:1px;background:#9a9eb0"></b><b class="a" style="left:0;top:5px;width:21px;height:1px;background:#9a9eb0"></b><b class="a" style="left:6px;top:0;width:10px;height:8px;border-radius:2px;background:#9094a6;box-shadow:0 0 0 1px #50535f"></b><b class="a" style="left:2px;top:9px;width:19px;height:2px;background:#80849a"></b></div><div class="sbtn" style="left:8px;top:18px;width:16px;height:11px;"><div class="a pl" style="left:4.9px;top:3.181px;font-size:7px;line-height:7px;color:#000;transform:scaleX(0.890);">M</div></div><div class="sbtn" style="left:30px;top:18px;width:16px;height:11px"><div class="a pl" style="left:5.2px;top:3.181px;font-size:7px;line-height:7px;color:#000;transform:scaleX(1.111);">S</div></div><div class="panbox"></div><div class="panlo"></div><svg class="a kv" style="left:4.1px;top:30.3px" width="46" height="27" viewBox="-23 -16 46 27"><path d="M-14.3 0 A14.3 14.3 0 1 1 14.3 0 V10.6 H-14.3 Z" fill="#000"/><rect x="-13" y="5.6" width="26" height="5" fill="url(#ks)"/><rect x="-21.9" y="1.5" width="8" height="9.1" rx="1" fill="#000"/><rect x="13.9" y="1.5" width="8" height="9.1" rx="1" fill="#000"/><path d="M1.66 -11.78 A11.9 11.9 0 0 1 8.27 -8.56" stroke="#e60f1c" stroke-width="3.2" fill="none"/><circle r="10.3" fill="url(#kg)"/><circle r="7.1" fill="url(#kf)" stroke="#6c707e" stroke-width=".8"/><path d="M0.15 -0.26 L3.15 -5.46" stroke="#0c0d11" stroke-width="1.6"/><text x="-18" y="8.5">L</text><text x="17.9" y="8.5">R</text><rect x="-2.2" y="-14.2" width="4.4" height="2.7" fill="#d8d8e0"/></svg><div class="a" style="left:0;top:59.8px;width:54px;height:1.6px;background:#2a2c35"></div><div class="fxk" style="left:9px;top:65px"><i></i></div><div class="fxk" style="left:9px;top:84px"><i></i></div><div class="fxk" style="left:30px;top:65px"><i></i></div><div class="fxk" style="left:30px;top:84px"><i></i></div><div class="fbox"><div class="lcd" style="left:6.2px;top:4.6px;width:31.8px;height:11.6px;letter-spacing:.95px"><u style="margin-right:-.95px">0,00</u></div><div class="dots" style="left:5px;top:20px;width:35px"></div><div class="slot" style="left:18px"></div><div class="slot" style="left:32px"></div><div class="chan"></div><div class="rail" style="left:24.9px"></div><div class="rail" style="left:29px"></div><div class="fh" style="top:25px"></div><div class="ftab"></div><div class="sname" style="top:136px;left:2.4px">Tom Mid</div></div></div><div class="strip" style="left:456px"><b class="a" style="left:1px;top:4px;width:3px;height:9px;background:repeating-linear-gradient(#74788a 0 2px,transparent 2px 3px)"></b><div class="sbtn" style="left:8px;top:3px;width:16px;height:11px"><b class="a" style="left:6px;top:2.5px;width:0;height:0;border:3px solid transparent;border-left:5px solid #111;border-right:0"></b></div><div class="led"></div><div class="deco"><b class="a" style="left:0;top:2px;width:21px;height:1px;background:#9a9eb0"></b><b class="a" style="left:0;top:5px;width:21px;height:1px;background:#9a9eb0"></b><b class="a" style="left:6px;top:0;width:10px;height:8px;border-radius:2px;background:#9094a6;box-shadow:0 0 0 1px #50535f"></b><b class="a" style="left:2px;top:9px;width:19px;height:2px;background:#80849a"></b></div><div class="sbtn" style="left:8px;top:18px;width:16px;height:11px;"><div class="a pl" style="left:4.9px;top:3.181px;font-size:7px;line-height:7px;color:#000;transform:scaleX(0.890);">M</div></div><div class="sbtn" style="left:30px;top:18px;width:16px;height:11px"><div class="a pl" style="left:5.2px;top:3.181px;font-size:7px;line-height:7px;color:#000;transform:scaleX(1.111);">S</div></div><div class="panbox"></div><div class="panlo"></div><svg class="a kv" style="left:4.1px;top:30.3px" width="46" height="27" viewBox="-23 -16 46 27"><path d="M-14.3 0 A14.3 14.3 0 1 1 14.3 0 V10.6 H-14.3 Z" fill="#000"/><rect x="-13" y="5.6" width="26" height="5" fill="url(#ks)"/><rect x="-21.9" y="1.5" width="8" height="9.1" rx="1" fill="#000"/><rect x="13.9" y="1.5" width="8" height="9.1" rx="1" fill="#000"/><path d="M-7.96 -8.84 A11.9 11.9 0 0 1 -1.66 -11.78" stroke="#e60f1c" stroke-width="3.2" fill="none"/><circle r="10.3" fill="url(#kg)"/><circle r="7.1" fill="url(#kf)" stroke="#6c707e" stroke-width=".8"/><path d="M-0.14 -0.26 L-2.96 -5.56" stroke="#0c0d11" stroke-width="1.6"/><text x="-18" y="8.5">L</text><text x="17.9" y="8.5">R</text><rect x="-2.2" y="-14.2" width="4.4" height="2.7" fill="#d8d8e0"/></svg><div class="a" style="left:0;top:59.8px;width:54px;height:1.6px;background:#2a2c35"></div><div class="fxk" style="left:9px;top:65px"><i></i></div><div class="fxk" style="left:9px;top:84px"><i></i></div><div class="fxk" style="left:30px;top:65px"><i></i></div><div class="fxk" style="left:30px;top:84px"><i></i></div><div class="fbox"><div class="lcd" style="left:6.2px;top:4.6px;width:31.8px;height:11.6px;letter-spacing:.95px"><u style="margin-right:-.95px">0,00</u></div><div class="dots" style="left:5px;top:20px;width:35px"></div><div class="slot" style="left:18px"></div><div class="slot" style="left:32px"></div><div class="chan"></div><div class="rail" style="left:24.9px"></div><div class="rail" style="left:29px"></div><div class="fh" style="top:33px"></div><div class="ftab"></div><div class="sname" style="top:136px;left:2.4px">Pedal HH</div></div></div><div class="strip" style="left:512px"><b class="a" style="left:1px;top:4px;width:3px;height:9px;background:repeating-linear-gradient(#74788a 0 2px,transparent 2px 3px)"></b><div class="sbtn" style="left:8px;top:3px;width:16px;height:11px"><b class="a" style="left:6px;top:2.5px;width:0;height:0;border:3px solid transparent;border-left:5px solid #111;border-right:0"></b></div><div class="led"></div><div class="deco"><b class="a" style="left:0;top:2px;width:21px;height:1px;background:#9a9eb0"></b><b class="a" style="left:0;top:5px;width:21px;height:1px;background:#9a9eb0"></b><b class="a" style="left:6px;top:0;width:10px;height:8px;border-radius:2px;background:#9094a6;box-shadow:0 0 0 1px #50535f"></b><b class="a" style="left:2px;top:9px;width:19px;height:2px;background:#80849a"></b></div><div class="sbtn" style="left:8px;top:18px;width:16px;height:11px;"><div class="a pl" style="left:4.9px;top:3.181px;font-size:7px;line-height:7px;color:#000;transform:scaleX(0.890);">M</div></div><div class="sbtn" style="left:30px;top:18px;width:16px;height:11px"><div class="a pl" style="left:5.2px;top:3.181px;font-size:7px;line-height:7px;color:#000;transform:scaleX(1.111);">S</div></div><div class="panbox"></div><div class="panlo"></div><svg class="a kv" style="left:4.1px;top:30.3px" width="46" height="27" viewBox="-23 -16 46 27"><path d="M-14.3 0 A14.3 14.3 0 1 1 14.3 0 V10.6 H-14.3 Z" fill="#000"/><rect x="-13" y="5.6" width="26" height="5" fill="url(#ks)"/><rect x="-21.9" y="1.5" width="8" height="9.1" rx="1" fill="#000"/><rect x="13.9" y="1.5" width="8" height="9.1" rx="1" fill="#000"/><path d="M-11.89 0.42 A11.9 11.9 0 0 1 -1.66 -11.78" stroke="#e60f1c" stroke-width="3.2" fill="none"/><circle r="10.3" fill="url(#kg)"/><circle r="7.1" fill="url(#kf)" stroke="#6c707e" stroke-width=".8"/><path d="M-0.29 -0.06 L-6.16 -1.31" stroke="#0c0d11" stroke-width="1.6"/><text x="-18" y="8.5">L</text><text x="17.9" y="8.5">R</text><rect x="-2.2" y="-14.2" width="4.4" height="2.7" fill="#d8d8e0"/></svg><div class="a" style="left:0;top:59.8px;width:54px;height:1.6px;background:#2a2c35"></div><div class="fxk" style="left:9px;top:65px"><i></i></div><div class="fxk" style="left:9px;top:84px"><i></i></div><div class="fxk" style="left:30px;top:65px"><i></i></div><div class="fxk" style="left:30px;top:84px"><i></i></div><div class="fbox"><div class="lcd" style="left:6.2px;top:4.6px;width:31.8px;height:11.6px;letter-spacing:.95px"><u style="margin-right:-.95px">0,00</u></div><div class="dots" style="left:5px;top:20px;width:35px"></div><div class="slot" style="left:18px"></div><div class="slot" style="left:32px"></div><div class="chan"></div><div class="rail" style="left:24.9px"></div><div class="rail" style="left:29px"></div><div class="fh" style="top:25px"></div><div class="ftab"></div><div class="sname" style="top:136px;left:2.4px">Tom Hi</div></div></div><div class="strip" style="left:568px"><b class="a" style="left:1px;top:4px;width:3px;height:9px;background:repeating-linear-gradient(#74788a 0 2px,transparent 2px 3px)"></b><div class="sbtn" style="left:8px;top:3px;width:16px;height:11px"><b class="a" style="left:6px;top:2.5px;width:0;height:0;border:3px solid transparent;border-left:5px solid #111;border-right:0"></b></div><div class="led"></div><div class="deco"><b class="a" style="left:0;top:2px;width:21px;height:1px;background:#9a9eb0"></b><b class="a" style="left:0;top:5px;width:21px;height:1px;background:#9a9eb0"></b><b class="a" style="left:6px;top:0;width:10px;height:8px;border-radius:2px;background:#9094a6;box-shadow:0 0 0 1px #50535f"></b><b class="a" style="left:2px;top:9px;width:19px;height:2px;background:#80849a"></b></div><div class="sbtn" style="left:8px;top:18px;width:16px;height:11px;"><div class="a pl" style="left:4.9px;top:3.181px;font-size:7px;line-height:7px;color:#000;transform:scaleX(0.890);">M</div></div><div class="sbtn" style="left:30px;top:18px;width:16px;height:11px"><div class="a pl" style="left:5.2px;top:3.181px;font-size:7px;line-height:7px;color:#000;transform:scaleX(1.111);">S</div></div><div class="panbox"></div><div class="panlo"></div><svg class="a kv" style="left:4.1px;top:30.3px" width="46" height="27" viewBox="-23 -16 46 27"><path d="M-14.3 0 A14.3 14.3 0 1 1 14.3 0 V10.6 H-14.3 Z" fill="#000"/><rect x="-13" y="5.6" width="26" height="5" fill="url(#ks)"/><rect x="-21.9" y="1.5" width="8" height="9.1" rx="1" fill="#000"/><rect x="13.9" y="1.5" width="8" height="9.1" rx="1" fill="#000"/><path d="M-6.65 -9.87 A11.9 11.9 0 0 1 -1.66 -11.78" stroke="#e60f1c" stroke-width="3.2" fill="none"/><circle r="10.3" fill="url(#kg)"/><circle r="7.1" fill="url(#kf)" stroke="#6c707e" stroke-width=".8"/><path d="M-0.10 -0.28 L-2.15 -5.92" stroke="#0c0d11" stroke-width="1.6"/><text x="-18" y="8.5">L</text><text x="17.9" y="8.5">R</text><rect x="-2.2" y="-14.2" width="4.4" height="2.7" fill="#d8d8e0"/></svg><div class="a" style="left:0;top:59.8px;width:54px;height:1.6px;background:#2a2c35"></div><div class="fxk" style="left:9px;top:65px"><i></i></div><div class="fxk" style="left:9px;top:84px"><i></i></div><div class="fxk" style="left:30px;top:65px"><i></i></div><div class="fxk" style="left:30px;top:84px"><i></i></div><div class="fbox"><div class="lcd" style="left:6.2px;top:4.6px;width:31.8px;height:11.6px;letter-spacing:.95px"><u style="margin-right:-.95px">0,00</u></div><div class="dots" style="left:5px;top:20px;width:35px"></div><div class="slot" style="left:18px"></div><div class="slot" style="left:32px"></div><div class="chan"></div><div class="rail" style="left:24.9px"></div><div class="rail" style="left:29px"></div><div class="fh" style="top:41.5px"></div><div class="ftab"></div><div class="sname" style="top:136px;left:2.4px">Open HH</div></div></div><div class="strip" style="left:624px"><b class="a" style="left:1px;top:4px;width:3px;height:9px;background:repeating-linear-gradient(#74788a 0 2px,transparent 2px 3px)"></b><div class="sbtn" style="left:8px;top:3px;width:16px;height:11px"><b class="a" style="left:6px;top:2.5px;width:0;height:0;border:3px solid transparent;border-left:5px solid #111;border-right:0"></b></div><div class="led"></div><div class="deco"><b class="a" style="left:0;top:2px;width:21px;height:1px;background:#9a9eb0"></b><b class="a" style="left:0;top:5px;width:21px;height:1px;background:#9a9eb0"></b><b class="a" style="left:6px;top:0;width:10px;height:8px;border-radius:2px;background:#9094a6;box-shadow:0 0 0 1px #50535f"></b><b class="a" style="left:2px;top:9px;width:19px;height:2px;background:#80849a"></b></div><div class="sbtn" style="left:8px;top:18px;width:16px;height:11px;"><div class="a pl" style="left:4.9px;top:3.181px;font-size:7px;line-height:7px;color:#000;transform:scaleX(0.890);">M</div></div><div class="sbtn" style="left:30px;top:18px;width:16px;height:11px"><div class="a pl" style="left:5.2px;top:3.181px;font-size:7px;line-height:7px;color:#000;transform:scaleX(1.111);">S</div></div><div class="panbox"></div><div class="panlo"></div><svg class="a kv" style="left:4.1px;top:30.3px" width="46" height="27" viewBox="-23 -16 46 27"><path d="M-14.3 0 A14.3 14.3 0 1 1 14.3 0 V10.6 H-14.3 Z" fill="#000"/><rect x="-13" y="5.6" width="26" height="5" fill="url(#ks)"/><rect x="-21.9" y="1.5" width="8" height="9.1" rx="1" fill="#000"/><rect x="13.9" y="1.5" width="8" height="9.1" rx="1" fill="#000"/><circle r="10.3" fill="url(#kg)"/><circle r="7.1" fill="url(#kf)" stroke="#6c707e" stroke-width=".8"/><path d="M0.00 -0.30 L0.00 -6.30" stroke="#0c0d11" stroke-width="1.6"/><text x="-18" y="8.5">L</text><text x="17.9" y="8.5">R</text><rect x="-2.2" y="-14.2" width="4.4" height="2.7" fill="#4be02a"/></svg><div class="a" style="left:0;top:59.8px;width:54px;height:1.6px;background:#2a2c35"></div><div class="fxk" style="left:9px;top:65px"><i></i></div><div class="fxk" style="left:9px;top:84px"><i></i></div><div class="fxk" style="left:30px;top:65px"><i></i></div><div class="fxk" style="left:30px;top:84px"><i></i></div><div class="fbox"><div class="lcd" style="left:6.2px;top:4.6px;width:31.8px;height:11.6px;letter-spacing:.95px"><u style="margin-right:-.95px">0,00</u></div><div class="dots" style="left:5px;top:20px;width:35px"></div><div class="slot" style="left:18px"></div><div class="slot" style="left:32px"></div><div class="chan"></div><div class="rail" style="left:24.9px"></div><div class="rail" style="left:29px"></div><div class="fh" style="top:41.5px"></div><div class="ftab"></div><div class="sname" style="top:136px;left:2.4px">Cowbell</div></div></div><div class="a" style="left:679px;top:27px;width:13px;height:253px;background:#5e6273;box-shadow:0 0 0 1px #2c2e38"></div><div class="a" style="left:679px;top:71.2px;width:13px;height:15.6px;background:linear-gradient(#8a8ea4,#7e8298)"></div><div class="a" style="left:685px;top:27px;width:1.3px;height:253px;background:#2f313b"></div><div class="a" style="left:690px;top:27px;width:1.5px;height:253px;background:#2f313b"></div><div class="a" style="left:679px;top:86.8px;width:13px;height:1.6px;background:#2a2c35"></div><div id="mframe"></div><div id="master"><div class="sbtn" style="left:14px;top:36px;width:41px;height:8px;border-radius:0"><div class="a pl" style="left:9px;top:-0.1722px;font-size:6.6px;line-height:6.6px;color:#15161c;transform:scaleX(1.098);">MUTE</div></div><div class="a" style="left:13px;top:49px;width:42px;height:216px;background:#585c6d;box-shadow:inset 0 0 0 1px #b4b8cc"></div><div class="lcd" style="left:18px;top:55px;width:32px;height:11.6px"><u>0,64</u></div><div class="dots" style="left:17px;top:70px;width:35px;height:4px"></div><div class="a" style="left:20px;top:79px;width:13px;height:181px;background:#1f2026;border-radius:1px"></div><div class="a" style="left:21px;top:81px;width:4px;height:177px;background:repeating-linear-gradient(0deg,#3a3c46 0 2px,#1f2026 2px 3px)"></div><div class="a" style="left:27px;top:81px;width:4px;height:177px;background:repeating-linear-gradient(0deg,#3a3c46 0 2px,#1f2026 2px 3px)"></div><div class="a" style="left:21px;top:153px;width:4px;height:105px;background:repeating-linear-gradient(0deg,#4cf01a 0 2px,#2a8a10 2px 3px)"></div><div class="a" style="left:21px;top:153px;width:4px;height:6px;background:repeating-linear-gradient(0deg,#d8f03a 0 2px,#6a8a10 2px 3px)"></div><div class="a" style="left:27px;top:155px;width:4px;height:103px;background:repeating-linear-gradient(0deg,#4cf01a 0 2px,#2a8a10 2px 3px)"></div><div class="a" style="left:27px;top:155px;width:4px;height:6px;background:repeating-linear-gradient(0deg,#d8f03a 0 2px,#6a8a10 2px 3px)"></div><div class="a" style="left:33px;top:79px;width:10px;height:185px;background:#6b6f82"></div><div class="a" style="left:43px;top:80px;width:2px;height:178px;background:#2c2e37"></div><div class="fh" style="left:37px;top:98px;width:13px"></div><div class="hl" style="top:77px"></div><div class="a pl" style="left:59px;top:80.8278px;font-size:6.6px;line-height:6.6px;color:#111;transform:scaleX(1.105);">HUMANIZE</div><div class="hl" style="top:88px"></div><svg class="a kv" style="left:58.2px;top:86.1px" width="46" height="28.5" viewBox="-23 -16 46 28.5"><path d="M-14.3 0 A14.3 14.3 0 1 1 14.3 0 V12.1 H-14.3 Z" fill="#000"/><rect x="-13" y="7.1" width="26" height="5" fill="url(#ks)"/><rect x="-21.9" y="3" width="8" height="9.1" rx="1" fill="#000"/><rect x="13.9" y="3" width="8" height="9.1" rx="1" fill="#000"/><path d="M-8.41 8.41 A11.9 11.9 0 0 1 -9.38 -7.33" stroke="#e60f1c" stroke-width="3.2" fill="none"/><circle r="10.3" fill="url(#kg)"/><circle r="7.1" fill="url(#kf)" stroke="#6c707e" stroke-width=".8"/><path d="M-0.28 -0.11 L-5.84 -2.36" stroke="#0c0d11" stroke-width="1.6"/><text x="-18" y="10">O</text><path d="M15.4 7.5 h5 M17.9 5 v5" stroke="#fff" stroke-width="1.3"/></svg><div class="a pl" style="left:59px;top:117.828px;font-size:6.6px;line-height:6.6px;color:#111;transform:scaleX(1.202);">VELOCITY</div><div class="hl" style="top:125px"></div><svg class="a kv" style="left:58.2px;top:123px" width="46" height="28.5" viewBox="-23 -16 46 28.5"><path d="M-14.3 0 A14.3 14.3 0 1 1 14.3 0 V12.1 H-14.3 Z" fill="#000"/><rect x="-13" y="7.1" width="26" height="5" fill="url(#ks)"/><rect x="-21.9" y="3" width="8" height="9.1" rx="1" fill="#000"/><rect x="13.9" y="3" width="8" height="9.1" rx="1" fill="#000"/><path d="M-8.41 8.41 A11.9 11.9 0 0 1 -11.90 -0.00" stroke="#e60f1c" stroke-width="3.2" fill="none"/><circle r="10.3" fill="url(#kg)"/><circle r="7.1" fill="url(#kf)" stroke="#6c707e" stroke-width=".8"/><path d="M-0.30 0.03 L-6.28 0.55" stroke="#0c0d11" stroke-width="1.6"/><text x="-18" y="10">O</text><path d="M15.4 7.5 h5 M17.9 5 v5" stroke="#fff" stroke-width="1.3"/></svg><div class="a pl" style="left:65.75px;top:154.828px;font-size:6.6px;line-height:6.6px;color:#111;transform:scaleX(1.161);">TIMING</div><div class="hl" style="top:162px"></div><svg class="a kv" style="left:58.2px;top:160px" width="46" height="28.5" viewBox="-23 -16 46 28.5"><path d="M-14.3 0 A14.3 14.3 0 1 1 14.3 0 V12.1 H-14.3 Z" fill="#000"/><rect x="-13" y="7.1" width="26" height="5" fill="url(#ks)"/><rect x="-21.9" y="3" width="8" height="9.1" rx="1" fill="#000"/><rect x="13.9" y="3" width="8" height="9.1" rx="1" fill="#000"/><circle r="10.3" fill="url(#kg)"/><circle r="7.1" fill="url(#kf)" stroke="#6c707e" stroke-width=".8"/><path d="M-0.21 0.21 L-4.45 4.45" stroke="#0c0d11" stroke-width="1.6"/><text x="-18" y="10">O</text><path d="M15.4 7.5 h5 M17.9 5 v5" stroke="#fff" stroke-width="1.3"/></svg><div class="a pl" style="left:67px;top:192.028px;font-size:6.6px;line-height:6.6px;color:#111;transform:scaleX(1.140);">SWING</div><div class="hl" style="top:199px"></div><div class="sbtn" style="left:61px;top:243px;width:40px;height:11px;background:linear-gradient(#4a8ae8,#a8d4ff 50%,#5a9af0)"><div class="a pl" style="left:6.9px;top:3.2395px;font-size:6.5px;line-height:6.5px;color:#0a1430;transform:scaleX(1.328);">PEAK</div></div><div class="sbtn" style="left:61px;top:259px;width:40px;height:11px"><div class="a pl" style="left:12.75px;top:3.0395px;font-size:6.5px;line-height:6.5px;color:#111;transform:scaleX(1.360);">FX</div></div><div class="a" style="left:106px;top:0;width:6px;height:276px;background:linear-gradient(90deg,#4a4d5b 0 1px,#7c8197 1px 3px,#3a3c48 3px 4px,#6a6e82 4px)"></div></div><div class="a sbh" style="left:1px;top:288px;width:684px;height:16px;"></div><div class="a sbb" style="left:1px;top:288px;width:16px;height:16px;"><div class="tri tl"></div></div><div class="a sbb" style="left:653px;top:288px;width:16px;height:16px;"><div class="tri tl"></div></div><div class="a sbb" style="left:669px;top:288px;width:16px;height:16px;"><div class="tri tr"></div></div><div class="a sbb" style="left:17px;top:288px;width:242px;height:16px;"><div class="grip"></div></div></div></div>
<div class="a" id="ip"><div class="a" style="left:8px;top:0px;width:1px;height:355px;background:#2b2d36"></div><div class="a" style="left:253px;top:0px;width:1px;height:355px;background:#2b2d36"></div><div class="a" style="left:9px;top:0px;width:244px;height:355px;background:#7a7f96"></div><div class="rk" style="top:19px;height:72px;background:#7a7f96"><svg class="a kv" style="left:15.5px;top:30px" width="46" height="28.5" viewBox="-23 -16 46 28.5"><path d="M-14.3 0 A14.3 14.3 0 1 1 14.3 0 V12.1 H-14.3 Z" fill="#000"/><rect x="-13" y="7.1" width="26" height="5" fill="url(#ks)"/><rect x="-21.9" y="3" width="8" height="9.1" rx="1" fill="#000"/><rect x="13.9" y="3" width="8" height="9.1" rx="1" fill="#000"/><circle r="10.3" fill="url(#kg)"/><circle r="7.1" fill="url(#kf)" stroke="#6c707e" stroke-width=".8"/><path d="M-0.21 0.21 L-4.45 4.45" stroke="#0c0d11" stroke-width="1.6"/><text x="-18" y="10">O</text><path d="M15.4 7.5 h5 M17.9 5 v5" stroke="#fff" stroke-width="1.3"/></svg><svg class="a kv" style="left:69px;top:30px" width="46" height="28.5" viewBox="-23 -16 46 28.5"><path d="M-14.3 0 A14.3 14.3 0 1 1 14.3 0 V12.1 H-14.3 Z" fill="#000"/><rect x="-13" y="7.1" width="26" height="5" fill="url(#ks)"/><rect x="-21.9" y="3" width="8" height="9.1" rx="1" fill="#000"/><rect x="13.9" y="3" width="8" height="9.1" rx="1" fill="#000"/><circle r="10.3" fill="url(#kg)"/><circle r="7.1" fill="url(#kf)" stroke="#6c707e" stroke-width=".8"/><path d="M-0.21 0.21 L-4.45 4.45" stroke="#0c0d11" stroke-width="1.6"/><text x="-18" y="10">O</text><path d="M15.4 7.5 h5 M17.9 5 v5" stroke="#fff" stroke-width="1.3"/></svg><svg class="a kv" style="left:121px;top:30px" width="46" height="28.5" viewBox="-23 -16 46 28.5"><path d="M-14.3 0 A14.3 14.3 0 1 1 14.3 0 V12.1 H-14.3 Z" fill="#000"/><rect x="-13" y="7.1" width="26" height="5" fill="url(#ks)"/><rect x="-21.9" y="3" width="8" height="9.1" rx="1" fill="#000"/><rect x="13.9" y="3" width="8" height="9.1" rx="1" fill="#000"/><path d="M-8.41 8.41 A11.9 11.9 0 1 1 8.41 8.41" stroke="#e60f1c" stroke-width="3.2" fill="none"/><circle r="10.3" fill="url(#kg)"/><circle r="7.1" fill="url(#kf)" stroke="#6c707e" stroke-width=".8"/><path d="M0.21 0.21 L4.45 4.45" stroke="#0c0d11" stroke-width="1.6"/><text x="-18" y="10">O</text><path d="M15.4 7.5 h5 M17.9 5 v5" stroke="#fff" stroke-width="1.3"/></svg><svg class="a kv" style="left:173px;top:30px" width="46" height="28.5" viewBox="-23 -16 46 28.5"><path d="M-14.3 0 A14.3 14.3 0 1 1 14.3 0 V12.1 H-14.3 Z" fill="#000"/><rect x="-13" y="7.1" width="26" height="5" fill="url(#ks)"/><rect x="-21.9" y="3" width="8" height="9.1" rx="1" fill="#000"/><rect x="13.9" y="3" width="8" height="9.1" rx="1" fill="#000"/><path d="M-8.41 8.41 A11.9 11.9 0 0 1 -11.49 3.08" stroke="#e60f1c" stroke-width="3.2" fill="none"/><circle r="10.3" fill="url(#kg)"/><circle r="7.1" fill="url(#kf)" stroke="#6c707e" stroke-width=".8"/><path d="M-0.28 0.10 L-5.92 2.15" stroke="#0c0d11" stroke-width="1.6"/><text x="-18" y="10">O</text><path d="M15.4 7.5 h5 M17.9 5 v5" stroke="#fff" stroke-width="1.3"/></svg><div class="a pl" style="left:21px;top:60.6225px;font-size:7.5px;line-height:7.5px;color:#fff;transform:scaleX(1.197);">ATTACK</div><div class="a pl" style="left:76px;top:60.6225px;font-size:7.5px;line-height:7.5px;color:#fff;transform:scaleX(1.160);">DECAY</div><div class="a pl" style="left:123px;top:60.6225px;font-size:7.5px;line-height:7.5px;color:#fff;transform:scaleX(1.185);">SUSTAIN</div><div class="a pl" style="left:174px;top:60.6225px;font-size:7.5px;line-height:7.5px;color:#fff;transform:scaleX(1.178);">RELEASE</div></div><div class="rk" style="top:95px;height:44px"><b class="nub" style="left:0;top:5px"></b><b class="nub" style="left:0;top:37px"></b><b class="nub" style="right:0;top:5px"></b><b class="nub" style="right:0;top:37px"></b><div class="rki" style="top:4px;height:37px"><div class="vent" style="left:3px;top:5px;height:28px"></div><div class="vent" style="right:3px;top:5px;height:28px"></div><div class="lcd" style="left:21px;top:7px;width:36px;height:14px;box-shadow:0 0 0 1px #3c3f4b;line-height:14px"><u>2,00</u></div><svg class="a kv" style="left:62px;top:-2px" width="46" height="28.5" viewBox="-23 -16 46 28.5"><path d="M-14.3 0 A14.3 14.3 0 1 1 14.3 0 V12.1 H-14.3 Z" fill="#000"/><rect x="-13" y="7.1" width="26" height="5" fill="url(#ks)"/><rect x="-21.9" y="3" width="8" height="9.1" rx="1" fill="#000"/><rect x="13.9" y="3" width="8" height="9.1" rx="1" fill="#000"/><path d="M-8.41 8.41 A11.9 11.9 0 0 1 -5.59 -10.51" stroke="#e60f1c" stroke-width="3.2" fill="none"/><circle r="10.3" fill="url(#kg)"/><circle r="7.1" fill="url(#kf)" stroke="#6c707e" stroke-width=".8"/><path d="M-0.16 -0.25 L-3.34 -5.34" stroke="#0c0d11" stroke-width="1.6"/><text x="-18" y="10">O</text><path d="M15.4 7.5 h5 M17.9 5 v5" stroke="#fff" stroke-width="1.3"/></svg><div class="lbar" style="top:26.75px"><div class="a pl" style="left:48.5px;top:0.9725px;font-size:7.5px;line-height:7.5px;color:#fff;transform:scaleX(1.157);">INSTRUMENT GAIN</div></div></div></div><div class="rk" style="top:141px;height:44px"><b class="nub" style="left:0;top:5px"></b><b class="nub" style="left:0;top:37px"></b><b class="nub" style="right:0;top:5px"></b><b class="nub" style="right:0;top:37px"></b><div class="rki" style="top:4px;height:37px"><div class="vent" style="left:3px;top:5px;height:28px"></div><div class="vent" style="right:3px;top:5px;height:28px"></div><div class="a" style="left:21px;top:4px;width:36px;height:18px;background:#848aa2;box-shadow:inset 0 0 0 1px #c8ccdc"></div><div class="a" style="left:24px;top:7px;width:30px;height:12px;background:linear-gradient(#ff9aa0,#f0606a);box-shadow:0 0 0 1px #5a1018;color:#5a060e"><div class="a pl" style="left:6px;top:2.7044px;font-size:6.8px;line-height:6.8px;color:#5a060e;transform:scaleX(1.257);">BYP</div></div><svg class="a kv" style="left:61.5px;top:-1px" width="46" height="28.5" viewBox="-23 -16 46 28.5"><path d="M-14.3 0 A14.3 14.3 0 1 1 14.3 0 V12.1 H-14.3 Z" fill="#000"/><rect x="-13" y="7.1" width="26" height="5" fill="url(#ks)"/><rect x="-21.9" y="3" width="8" height="9.1" rx="1" fill="#000"/><rect x="13.9" y="3" width="8" height="9.1" rx="1" fill="#000"/><path d="M-8.41 8.41 A11.9 11.9 0 1 1 8.41 8.41" stroke="#e60f1c" stroke-width="3.2" fill="none"/><circle r="10.3" fill="url(#kg)"/><circle r="7.1" fill="url(#kf)" stroke="#6c707e" stroke-width=".8"/><path d="M0.21 0.21 L4.45 4.45" stroke="#0c0d11" stroke-width="1.6"/><text x="-18" y="10">O</text><path d="M15.4 7.5 h5 M17.9 5 v5" stroke="#fff" stroke-width="1.3"/></svg><svg class="a kv" style="left:115px;top:-1px" width="46" height="28.5" viewBox="-23 -16 46 28.5"><path d="M-14.3 0 A14.3 14.3 0 1 1 14.3 0 V12.1 H-14.3 Z" fill="#000"/><rect x="-13" y="7.1" width="26" height="5" fill="url(#ks)"/><rect x="-21.9" y="3" width="8" height="9.1" rx="1" fill="#000"/><rect x="13.9" y="3" width="8" height="9.1" rx="1" fill="#000"/><circle r="10.3" fill="url(#kg)"/><circle r="7.1" fill="url(#kf)" stroke="#6c707e" stroke-width=".8"/><path d="M-0.21 0.21 L-4.45 4.45" stroke="#0c0d11" stroke-width="1.6"/><text x="-18" y="10">O</text><path d="M15.4 7.5 h5 M17.9 5 v5" stroke="#fff" stroke-width="1.3"/></svg><div class="lbar" style="top:26.5px"><div class="a pl" style="left:49.5px;top:1.8725px;font-size:7.5px;line-height:7.5px;color:#fff;transform:scaleX(1.125);">CUTOFF</div><div class="a pl" style="left:99.5px;top:1.8725px;font-size:7.5px;line-height:7.5px;color:#fff;transform:scaleX(1.142);">RESONANCE</div></div></div></div><div class="rk" style="top:187px;height:44px"><b class="nub" style="left:0;top:5px"></b><b class="nub" style="left:0;top:37px"></b><b class="nub" style="right:0;top:5px"></b><b class="nub" style="right:0;top:37px"></b><div class="rki" style="top:4px;height:37px"><div class="vent" style="left:3px;top:5px;height:28px"></div><div class="vent" style="right:3px;top:5px;height:28px"></div><svg class="a kv" style="left:61.5px;top:-1.5px" width="46" height="28.5" viewBox="-23 -16 46 28.5"><path d="M-14.3 0 A14.3 14.3 0 1 1 14.3 0 V12.1 H-14.3 Z" fill="#000"/><rect x="-13" y="7.1" width="26" height="5" fill="url(#ks)"/><rect x="-21.9" y="3" width="8" height="9.1" rx="1" fill="#000"/><rect x="13.9" y="3" width="8" height="9.1" rx="1" fill="#000"/><path d="M-8.41 8.41 A11.9 11.9 0 0 1 -11.72 2.07" stroke="#e60f1c" stroke-width="3.2" fill="none"/><circle r="10.3" fill="url(#kg)"/><circle r="7.1" fill="url(#kf)" stroke="#6c707e" stroke-width=".8"/><path d="M-0.30 -0.00 L-6.30 -0.00" stroke="#0c0d11" stroke-width="1.6"/><text x="-18" y="10">O</text><path d="M15.4 7.5 h5 M17.9 5 v5" stroke="#fff" stroke-width="1.3"/></svg><div class="lbar" style="top:26.5px"><div class="a pl" style="left:49.5px;top:2.1225px;font-size:7.5px;line-height:7.5px;color:#fff;transform:scaleX(1.118);">RANDOM PITCH</div></div></div></div><div class="a" style="left:9px;top:234px;width:244px;height:1px;background:#2b2d36"></div><div class="a" style="left:9px;top:236px;width:244px;height:4px;background:#6a6e82;box-shadow:0 0 0 1px #2b2d36"></div><div class="rk" style="top:245px;height:91px;background:#858aa3"><b class="nub" style="left:0;top:5px"></b><b class="nub" style="left:0;top:84px"></b><b class="nub" style="right:0;top:5px"></b><b class="nub" style="right:0;top:84px"></b><div class="vent" style="left:9px;top:10px;width:25px;height:75px;background:repeating-linear-gradient(#6a6f84 0 2px,#9a9fb5 2px 4px)"></div><div class="vent" style="left:201px;top:10px;width:25px;height:75px;background:repeating-linear-gradient(#6a6f84 0 2px,#9a9fb5 2px 4px)"></div><div id="logo"><span style="display:inline-block;width:6px;height:6px;border:3.4px solid #4c4f5e;border-radius:50%;vertical-align:-2px;margin-right:1px;background:#6a6e80"></span>hydrogen</div></div><div class="a" style="left:9px;top:340px;width:244px;height:1px;background:#2b2d36"></div><div class="a" style="left:9px;top:342px;width:244px;height:3px;background:#6a6e82;box-shadow:0 0 0 1px #2b2d36"></div></div>
<div class="a win" id="pw"><div class="a" style="left:-1px;top:-1px;width:719px;height:446px"><div class="a tb" style="left:2px;top:2px;width:715px"><div class="ico"><b style="left:0px;top:0px;width:14px;height:10px;background:#5467a8"></b><b style="left:2px;top:0px;width:3px;height:10px;background:#17245e"></b><b style="left:5px;top:4px;width:2px;height:2px;background:#17245e"></b><b style="left:0px;top:0px;width:2px;height:10px;background:#6a7cb8"></b><b style="left:5px;top:0px;width:1px;height:3px;background:#e8ecf8"></b><b style="left:7px;top:1px;width:6px;height:1.6px;background:#f6f7ff"></b><b style="left:11.4px;top:2px;width:1.6px;height:3px;background:#f6f7ff"></b><b style="left:7px;top:4.2px;width:6px;height:1.6px;background:#f6f7ff"></b><b style="left:7px;top:5px;width:1.6px;height:3px;background:#f6f7ff"></b><b style="left:7px;top:7.4px;width:6px;height:1.6px;background:#f6f7ff"></b><b style="left:0px;top:10px;width:14px;height:4px;background:#c6cbdf"></b><b style="left:0px;top:12px;width:14px;height:1px;background:repeating-linear-gradient(90deg,#8f98bc 0 2px,#c6cbdf 2px 3px)"></b></div><div class="ti" style="color:#fff">Editor di pattern - strofa</div><div class="wb" style="left:667px"><b style="position:absolute;left:4px;top:8px;width:6px;height:2px;background:#000"></b></div><div class="wb" style="left:683px"><b style="position:absolute;left:2px;top:2px;width:10px;height:9px;border:1px solid #000;border-top-width:2px;box-sizing:border-box"></b></div><div class="wb" style="left:699px"><svg width="14" height="14" style="position:absolute;left:0;top:0"><path d="M3.5 3 L10.5 10 M10.5 3 L3.5 10" stroke="#000" stroke-width="1.6" fill="none"/></svg></div></div><div class="pp" style="left:7px;width:214px"><b class="nb" style="left:0;top:4px"></b><b class="nb" style="right:0;top:4px"></b><b class="nb" style="left:0;top:34px"></b><b class="nb" style="right:0;top:34px"></b><div class="rv" style="left:5px;top:8px;height:24px"></div><div class="rv" style="right:5px;top:8px;height:24px"></div><div class="ppi" style="left:10px;width:196px"><div class="a pl" style="left:4.75px;top:4.9076px;font-size:7.2px;line-height:7.2px;color:#fff;transform:scaleX(1.309);">PATTERN</div><div class="a pl" style="left:60.75px;top:4.9076px;font-size:7.2px;line-height:7.2px;color:#fff;transform:scaleX(1.108);">NAME</div><div class="plcd" style="left:5px;top:18px;width:32px">1</div><div class="a" style="left:41px;top:16px;width:14px;height:16px;border-radius:1px;background:linear-gradient(#eceef4,#b4b8c6);box-shadow:0 0 0 1px #1c1d23"><b class="a" style="left:0;top:8px;width:14px;height:1px;background:#3c3e48"></b><b class="a" style="left:4px;top:4px;width:6px;height:1px;background:#111"></b><b class="a" style="left:6.5px;top:1.5px;width:1px;height:6px;background:#111"></b><b class="a" style="left:4px;top:12px;width:6px;height:1px;background:#111"></b></div><div class="plcd" style="left:61px;top:18px;width:129px">strofa</div></div></div><div class="pp" style="left:223px;width:154px"><b class="nb" style="left:0;top:4px"></b><b class="nb" style="right:0;top:4px"></b><b class="nb" style="left:0;top:34px"></b><b class="nb" style="right:0;top:34px"></b><div class="rv" style="left:4px;top:8px;height:24px"></div><div class="rv" style="right:4px;top:8px;height:24px"></div><div class="ppi" style="left:10px;width:135px"><div class="a pl" style="left:6px;top:4.9076px;font-size:7.2px;line-height:7.2px;color:#fff;transform:scaleX(1.208);">SIZE</div><div class="a pl" style="left:60px;top:4.9076px;font-size:7.2px;line-height:7.2px;color:#fff;transform:scaleX(1.219);">RESOLUTION</div><div class="plcd" style="left:6px;top:18px;width:32px">8</div><div class="dd" style="left:42px;top:17.5px"></div><div class="plcd" style="left:60px;top:18px;width:56px">16</div><div class="dd" style="left:120px;top:17.5px"></div></div></div><div class="pp" style="left:380px;width:105px"><b class="nb" style="left:0;top:4px"></b><b class="nb" style="right:0;top:4px"></b><b class="nb" style="left:0;top:34px"></b><b class="nb" style="right:0;top:34px"></b><div class="rv" style="left:4px;top:8px;height:24px"></div><div class="rv" style="right:4px;top:8px;height:24px"></div><div class="a pl" style="left:10px;top:5.5012px;font-size:6.4px;line-height:6.4px;color:#15161c;transform:scaleX(1.289);">RECORDING</div><div class="a" style="left:68.4px;top:6.5px;width:25.5px;height:4px;border-radius:2px;background:#555868"></div><div class="a" style="left:10.25px;top:34.5px;width:83.5px;height:4px;border-radius:2px;background:#555868"></div><div class="a" style="left:10.25px;top:14.5px;width:24.5px;height:18px;border-radius:3px;background:#4c4f5d"></div><div class="a" style="left:37px;top:14.5px;width:30px;height:20.5px;border-radius:3px;background:#4c4f5d"></div><div class="a" style="left:69.25px;top:14.5px;width:24.5px;height:18px;border-radius:3px;background:#4c4f5d"></div><div class="a" style="left:13px;top:17px;width:19px;height:13px;border-radius:1px;background:linear-gradient(#4a8ae8,#a8d4ff 55%,#5a9af0);box-shadow:0 0 0 1px #1c1d23"><svg class="a" style="left:0;top:0" width="19" height="13"><path d="M7.5 9.5 V3.5 L13 2.5 V8.5" stroke="#0a1430" stroke-width="1.4" fill="none"/><path d="M7.5 4.8 L13 3.8" stroke="#0a1430" stroke-width="1.2"/><ellipse cx="6.2" cy="9.6" rx="1.9" ry="1.5" fill="#0a1430"/><ellipse cx="11.7" cy="8.6" rx="1.9" ry="1.5" fill="#0a1430"/></svg></div><div class="a" style="left:40.25px;top:17.25px;width:24px;height:15px;border-radius:1px;background:linear-gradient(#e4e6ec,#a4a8b6);box-shadow:0 0 0 1px #1c1d23"><b class="a" style="left:6.5px;top:2.5px;width:10.5px;height:10.5px;border-radius:50%;border:2px solid #d41424"></b></div><div class="a" style="left:72px;top:17px;width:19px;height:13px;border-radius:1px;background:linear-gradient(#4a8ae8,#a8d4ff 55%,#5a9af0);box-shadow:0 0 0 1px #1c1d23;font-weight:bold;font-size:10.5px;line-height:12px;text-align:center;color:#0a1430">Q</div></div><div class="pp" style="left:7px;top:69px;width:95px;height:23px;background:#7f8499"><b class="nb" style="left:0;top:4px"></b><b class="nb" style="right:0;top:4px"></b><b class="nb" style="left:0;top:17px"></b><b class="nb" style="right:0;top:17px"></b><div class="rv" style="left:5px;top:7px;height:9px"></div><div class="rv" style="right:5px;top:7px;height:9px"></div><div class="a" style="left:27px;top:3px;width:40px;height:17px;border-radius:3px;background:#3a3c47"></div><div class="a" style="left:30px;top:6px;width:16px;height:11px;border-radius:1px;background:linear-gradient(#eceef4,#aeb2c0)"><svg class="a" style="left:0;top:0" width="16" height="11"><path d="M5 4 L8 8 L11 4" stroke="#111" stroke-width="1.7" fill="none"/></svg></div><div class="a" style="left:48px;top:6px;width:16px;height:11px;border-radius:1px;background:linear-gradient(#eceef4,#aeb2c0)"><svg class="a" style="left:0;top:0" width="16" height="11"><path d="M5 8 L8 4 L11 8" stroke="#111" stroke-width="1.7" fill="none"/></svg></div></div><div class="a" id="pruler"><b class="a" style="left:586px;top:0;width:5px;height:21px;background:#b4b6ad"></b><span style="left:10px">1</span><i style="left:46px"></i><i style="left:82px"></i><i style="left:118px"></i><span style="left:154px">2</span><i style="left:190px"></i><i style="left:226px"></i><i style="left:262px"></i><span style="left:298px">3</span><i style="left:334px"></i><i style="left:370px"></i><i style="left:406px"></i><span style="left:442px">4</span><i style="left:478px"></i><i style="left:514px"></i><i style="left:550px"></i><span style="left:585px">5</span><b class="a" style="left:446px;top:13px;width:0;height:0;border:5px solid transparent;border-top:6px solid #000;border-bottom:0"></b></div><div class="a" style="left:7px;top:94px;width:691px;height:2px;background:#50535b"></div><div class="a" id="plist"><div class="ir" style="top:-7px;background:#cdd0e2">Ride Rock</div><div class="ir" style="top:9px;background:#f4f4fc">Crash</div><div class="ir" style="top:25px;background:#cdd0e2">Ride Jazz</div><div class="ir" style="top:41px;background:#f4f4fc">Cowbell</div><div class="ir" style="top:57px;background:#cdd0e2">Open HH</div><div class="ir" style="top:73px;background:#f4f4fc">Tom Hi</div><div class="ir" style="top:89px;background:#cdd0e2">Pedal HH</div><div class="ir" style="top:105px;background:#f4f4fc">Tom Mid</div><div class="ir" style="top:121px;background:#5b9ce9">Closed HH</div><div class="ir" style="top:137px;background:#f4f4fc">Tom Low</div><div class="ir" style="top:153px;background:#cdd0e2">Snare Rock</div><div class="ir" style="top:169px;background:#f4f4fc">Hand Clap</div><div class="ir" style="top:185px;background:#cdd0e2">Snare Jazz</div><div class="ir" style="top:201px;background:#f4f4fc">Stick</div><div class="ir" style="top:217px;background:#cdd0e2">Kick</div></div><div class="a" id="pgrid"><div class="gr" style="top:-7px;background:#cdd0e2"></div><div class="gr" style="top:9px;background:#f4f4fc"></div><div class="gr" style="top:25px;background:#cdd0e2"></div><div class="gr" style="top:41px;background:#c6c9c4"></div><div class="gr" style="top:57px;background:#cdd0e2"></div><div class="gr" style="top:73px;background:#f4f4fc"></div><div class="gr" style="top:89px;background:#cdd0e2"></div><div class="gr" style="top:105px;background:#f4f4fc"></div><div class="gr" style="top:121px;background:#5b9ce9"></div><div class="gr" style="top:137px;background:#f4f4fc"></div><div class="gr" style="top:153px;background:#cdd0e2"></div><div class="gr" style="top:169px;background:#c6c9c4"></div><div class="gr" style="top:185px;background:#cdd0e2"></div><div class="gr" style="top:201px;background:#f4f4fc"></div><div class="gr" style="top:217px;background:#cdd0e2"></div><div class="vl" style="left:10px;top:-2px"></div><div class="vl q" style="left:46px;top:-2px"></div><div class="vl" style="left:82px;top:-2px"></div><div class="vl q" style="left:118px;top:-2px"></div><div class="vl" style="left:154px;top:-2px"></div><div class="vl q" style="left:190px;top:-2px"></div><div class="vl" style="left:226px;top:-2px"></div><div class="vl q" style="left:262px;top:-2px"></div><div class="vl" style="left:298px;top:-2px"></div><div class="vl q" style="left:334px;top:-2px"></div><div class="vl" style="left:370px;top:-2px"></div><div class="vl q" style="left:406px;top:-2px"></div><div class="vl" style="left:442px;top:-2px"></div><div class="vl q" style="left:478px;top:-2px"></div><div class="vl" style="left:514px;top:-2px"></div><div class="vl q" style="left:550px;top:-2px"></div><div class="vl" style="left:586px;top:-2px"></div><div class="a" style="left:587px;top:0;width:4px;height:233px;background:#c9ccdc"></div><div class="nt" style="left:10.5px;top:128px"></div><div class="nt" style="left:82.5px;top:128px"></div><div class="nt" style="left:154.5px;top:128px"></div><div class="nt" style="left:226.5px;top:128px"></div><div class="nt" style="left:298.5px;top:128px"></div><div class="nt" style="left:370.5px;top:128px"></div><div class="nt" style="left:442.5px;top:128px"></div><div class="nt" style="left:514.5px;top:128px"></div><div class="nt" style="left:154.5px;top:192px"></div><div class="nt" style="left:442.5px;top:192px"></div><div class="nt" style="left:10.5px;top:224px"></div><div class="nt" style="left:262.5px;top:224px"></div><div class="nt" style="left:298.5px;top:224px"></div><div class="nt" style="left:370.5px;top:224px"></div></div><div class="a" id="pvel"><div class="vl" style="left:10px;height:100px;opacity:.55"></div><div class="vl q" style="left:46px;height:100px;opacity:.55"></div><div class="vl" style="left:82px;height:100px;opacity:.55"></div><div class="vl q" style="left:118px;height:100px;opacity:.55"></div><div class="vl" style="left:154px;height:100px;opacity:.55"></div><div class="vl q" style="left:190px;height:100px;opacity:.55"></div><div class="vl" style="left:226px;height:100px;opacity:.55"></div><div class="vl q" style="left:262px;height:100px;opacity:.55"></div><div class="vl" style="left:298px;height:100px;opacity:.55"></div><div class="vl q" style="left:334px;height:100px;opacity:.55"></div><div class="vl" style="left:370px;height:100px;opacity:.55"></div><div class="vl q" style="left:406px;height:100px;opacity:.55"></div><div class="vl" style="left:442px;height:100px;opacity:.55"></div><div class="vl q" style="left:478px;height:100px;opacity:.55"></div><div class="vl" style="left:514px;height:100px;opacity:.55"></div><div class="vl q" style="left:550px;height:100px;opacity:.55"></div><div class="vl" style="left:586px;height:100px;opacity:.55"></div><div class="vb" style="left:9px;height:80px;background:#17181e"></div><div class="vb" style="left:81px;height:57px;background:#2e2f38"></div><div class="vb" style="left:153px;height:77px;background:#17181e"></div><div class="vb" style="left:225px;height:52px;background:#3a3b45"></div><div class="vb" style="left:297px;height:80px;background:#17181e"></div><div class="vb" style="left:369px;height:51px;background:#3a3b45"></div><div class="vb" style="left:441px;height:75px;background:#17181e"></div><div class="vb" style="left:513px;height:80px;background:#17181e"></div></div><div class="a sbh" style="left:106px;top:428px;width:591px;height:16px;"></div><div class="a sbb" style="left:106px;top:428px;width:16px;height:16px;"><div class="tri tl"></div></div><div class="a sbb" style="left:665px;top:428px;width:16px;height:16px;"><div class="tri tl"></div></div><div class="a sbb" style="left:681px;top:428px;width:16px;height:16px;"><div class="tri tr"></div></div><div class="a sbb" style="left:122px;top:428px;width:64px;height:16px;"><div class="grip"></div></div><div class="a" style="left:697px;top:96px;width:15px;height:231px;background:#f8f8f6;background-image:radial-gradient(circle at 1px 1px,#eeefeb .8px,transparent 1px);background-size:2px 2px"></div><div class="a sbb" style="left:697px;top:96px;width:15px;height:16px;"><div class="tri tu"></div></div><div class="a sbb" style="left:697px;top:202px;width:15px;height:94px;"><div class="grip" style="width:9px;height:19px;margin:-10px 0 0 -4px"></div></div><div class="a sbb" style="left:697px;top:296px;width:15px;height:16px;"><div class="tri tu"></div></div><div class="a sbb" style="left:697px;top:312px;width:15px;height:16px;"><div class="tri td"></div></div></div></div>
<div class="a" id="tbar"><div class="tp" style="left:5px;width:315px"><b class="nub" style="left:0;top:4px"></b><b class="nub" style="left:0;top:33px"></b><b class="nub" style="right:0;top:4px"></b><b class="nub" style="right:0;top:33px"></b><div class="rivets" style="left:5px"></div><div class="rivets" style="right:5px"></div><div class="dmb" style="left:10px;top:1px;width:150.5px;height:37px"></div><div class="dm" style="left:13.5px;top:3px;width:144px;height:24px"><div class="a" style="left:1px;top:1px;width:142px;height:1px;background:repeating-linear-gradient(90deg,#b4d8ee 0 1px,transparent 1px 2px)"></div><b class="a" style="left:1px;top:1px;width:1px;height:3px;background:#b4d8ee"></b><b class="a" style="left:142px;top:1px;width:1px;height:3px;background:#b4d8ee"></b><div class="dg" style="left:13.5px;top:6.5px;font-size:18px;letter-spacing:1.35px">00:00:26</div><div class="dg" style="left:114px;top:11px;font-size:13px;letter-spacing:1.7px">650</div><div class="dmo"></div></div><div class="a pl" style="left:32.9px;top:30.9927px;font-size:6.9px;line-height:6.9px;color:#b4c4f2;transform:scaleX(1.189);">HRS</div><div class="a pl" style="left:70.7px;top:30.9927px;font-size:6.9px;line-height:6.9px;color:#b4c4f2;transform:scaleX(1.039);">MIN</div><div class="a pl" style="left:103px;top:30.9927px;font-size:6.9px;line-height:6.9px;color:#b4c4f2;transform:scaleX(1.221);">SEC</div><div class="a pl" style="left:128.8px;top:30.9927px;font-size:6.9px;line-height:6.9px;color:#b4c4f2;transform:scaleX(1.025);">1/1000</div><div class="a" style="left:166px;top:4px;width:111px;height:7px;border-radius:3px;background:#5b5f70"></div><div class="a" style="left:175px;top:6px;width:93px;height:3px;border-radius:1px;background:#0a0a0d"></div><b class="a" style="left:167px;top:4.5px;width:0;height:0;border:3px solid transparent;border-right:5px solid #9a9eb0;border-left:0"></b><b class="a" style="left:271px;top:4.5px;width:0;height:0;border:3px solid transparent;border-left:5px solid #9a9eb0;border-right:0"></b><div class="a" style="left:166px;top:35px;width:140px;height:4px;border-radius:2px;background:#5b5f70"></div><div class="tbtn " style="left:169px;top:16px;width:20px;height:14px"><svg class="a" style="left:0;top:0" width="20" height="14"><path d="M9.5 3 L9.5 11 L4.5 7 Z M15.5 3 L15.5 11 L10.5 7 Z" fill="#111"/></svg></div><div class="tbtn bl2" style="left:196px;top:16px;width:25px;height:16px"><svg class="a" style="left:0;top:0" width="25" height="16"><path d="M6 4 h2 v9 h-2z M10 4 h2 v9 h-2z M15 3.5 L21 8.5 L15 13.5 Z" fill="#0a1430"/></svg></div><div class="tbtn " style="left:228px;top:16px;width:20px;height:14px"><svg class="a" style="left:0;top:0" width="20" height="14"><rect x="6.5" y="3.5" width="7" height="7" fill="#111"/></svg></div><div class="tbtn " style="left:255px;top:16px;width:19px;height:14px"><svg class="a" style="left:0;top:0" width="19" height="14"><path d="M4.5 3 L4.5 11 L9.5 7 Z M10 3 L10 11 L15 7 Z" fill="#111"/></svg></div><div class="tbtn bl2" style="left:284px;top:16px;width:19px;height:14px"><svg class="a" style="left:0;top:0" width="19" height="14"><path d="M3 5 h11 M11 2 l3 3 l-3 3 M16 10 h-11 M8 7 l-3 3 l3 3" stroke="#0a1430" stroke-width="1.5" fill="none"/></svg></div></div><div class="tp" style="left:322px;width:88px"><b class="nub" style="left:0;top:4px"></b><b class="nub" style="left:0;top:33px"></b><b class="nub" style="right:0;top:4px"></b><b class="nub" style="right:0;top:33px"></b><div class="rivets" style="left:5px"></div><div class="rivets" style="right:5px"></div><div class="blk" style="left:10.4px;top:3.25px;width:68.5px;height:8.5px"></div><div class="tled" style="left:11.6px;top:4.5px;width:9px;height:6px;background:linear-gradient(#8a8e9e,#5c6070)"></div><div class="a pl" style="left:25.75px;top:4.9927px;font-size:6.9px;line-height:6.9px;color:#fff;transform:scaleX(1.134);">PATTERN</div><div class="blk" style="left:10.4px;top:14.5px;width:68.5px;height:8.5px"></div><div class="tled" style="left:11.6px;top:15.7px;width:9px;height:6px;background:linear-gradient(#bfe4ff,#5aa6f4)"></div><div class="a pl" style="left:25px;top:15.9927px;font-size:6.9px;line-height:6.9px;color:#fff;transform:scaleX(1.010);">SONG</div><div class="tbtn nw" style="left:10.4px;top:25.75px;width:68px;height:11.5px"><div class="a pl" style="left:20.35px;top:3.5278px;font-size:6.6px;line-height:6.6px;color:#111;transform:scaleX(1.139);">MODE</div></div></div><div class="tp" style="left:412px;width:143px"><b class="nub" style="left:0;top:4px"></b><b class="nub" style="left:0;top:33px"></b><b class="nub" style="right:0;top:4px"></b><b class="nub" style="right:0;top:33px"></b><div class="rivets" style="left:4px"></div><div class="rivets" style="right:5px"></div><div class="a" style="left:10.4px;top:2.6px;width:19px;height:19.5px;border-radius:3px;background:#555868"></div><div class="tbtn nw" style="left:13px;top:4.5px;width:14px;height:7.5px;border-radius:1px"><b class="a" style="left:4px;top:3px;width:6px;height:1.3px;background:#111"></b><b class="a" style="left:6.3px;top:1px;width:1.3px;height:5.5px;background:#111"></b></div><div class="tbtn nw" style="left:13px;top:12.6px;width:14px;height:7.5px;border-radius:1px"><b class="a" style="left:4px;top:3px;width:6px;height:1.3px;background:#111"></b></div><div class="tbtn nw bl2" style="left:10.75px;top:25.75px;width:18px;height:11.5px"><svg class="a" style="left:0;top:0" width="18" height="12"><path d="M3.5 6 L8 2.5 V9.5 Z" fill="none" stroke="#0a1430" stroke-width="1.1"/><path d="M10.2 3.5 v5 M12.7 2.8 q1.6 3.2 0 6.4" fill="none" stroke="#0a1430" stroke-width="1.3"/></svg></div><div class="dmb" style="left:36px;top:1px;width:96.75px;height:36.6px"></div><div class="dm" style="left:39px;top:3px;width:91px;height:26.75px"><div class="dg" style="left:18.6px;top:-3px;font-size:20.5px;letter-spacing:1.6px;color:#98bcd4;font-weight:bold">88.00</div><div class="a" style="left:3px;top:19.5px;width:86px;height:1px;background:repeating-linear-gradient(90deg,#c4e2f4 0 1px,transparent 1px 4px)"></div><div class="a" style="left:3px;top:23.4px;width:86px;height:1px;background:repeating-linear-gradient(90deg,#c4e2f4 0 1px,transparent 1px 2px)"></div><div class="dmo"></div></div><div class="a pl" style="left:110px;top:31.4512px;font-size:6.4px;line-height:6.4px;color:#a8b8ea;transform:scaleX(1.255);">BPM</div></div><div class="tp" style="left:558px;width:110.6px"><b class="nub" style="left:0;top:4px"></b><b class="nub" style="left:0;top:33px"></b><b class="nub" style="right:0;top:4px"></b><b class="nub" style="right:0;top:33px"></b><div class="rivets" style="left:4px"></div><div class="rivets" style="right:5px"></div><div class="a" style="left:9.4px;top:2.6px;width:91.2px;height:7px;border-radius:3px;background:#5b5f70"></div><div class="a" style="left:11.25px;top:4.5px;width:87.75px;height:3.5px;background:#060608"><b class="a" style="left:.75px;top:0;width:2px;height:3.5px;background:#4be02a"></b></div><div class="blk" style="left:9.4px;top:13.25px;width:57.6px;height:8.5px"></div><div class="tled" style="left:10.6px;top:14.25px;width:9px;height:6.2px;background:linear-gradient(#8a8e9e,#5c6070)"></div><div class="a pl" style="left:24.75px;top:15.0278px;font-size:6.6px;line-height:6.6px;color:#fff;transform:scaleX(1.237);">MIDI-IN</div><div class="a" style="left:68px;top:13.25px;width:32.6px;height:8.5px;border-radius:3px;background:#5b5f70"></div><div class="a pl" style="left:74px;top:15.0278px;font-size:6.6px;line-height:6.6px;color:#fff;transform:scaleX(1.230);">CPU</div><div class="tbtn nw bl2" style="left:9.4px;top:25.5px;width:91.2px;height:11.75px"><div class="a pl" style="left:12.6px;top:3.7778px;font-size:6.6px;line-height:6.6px;color:#0a1430;transform:scaleX(1.374);">JACK TRANS.</div></div></div></div>
</body></html>
